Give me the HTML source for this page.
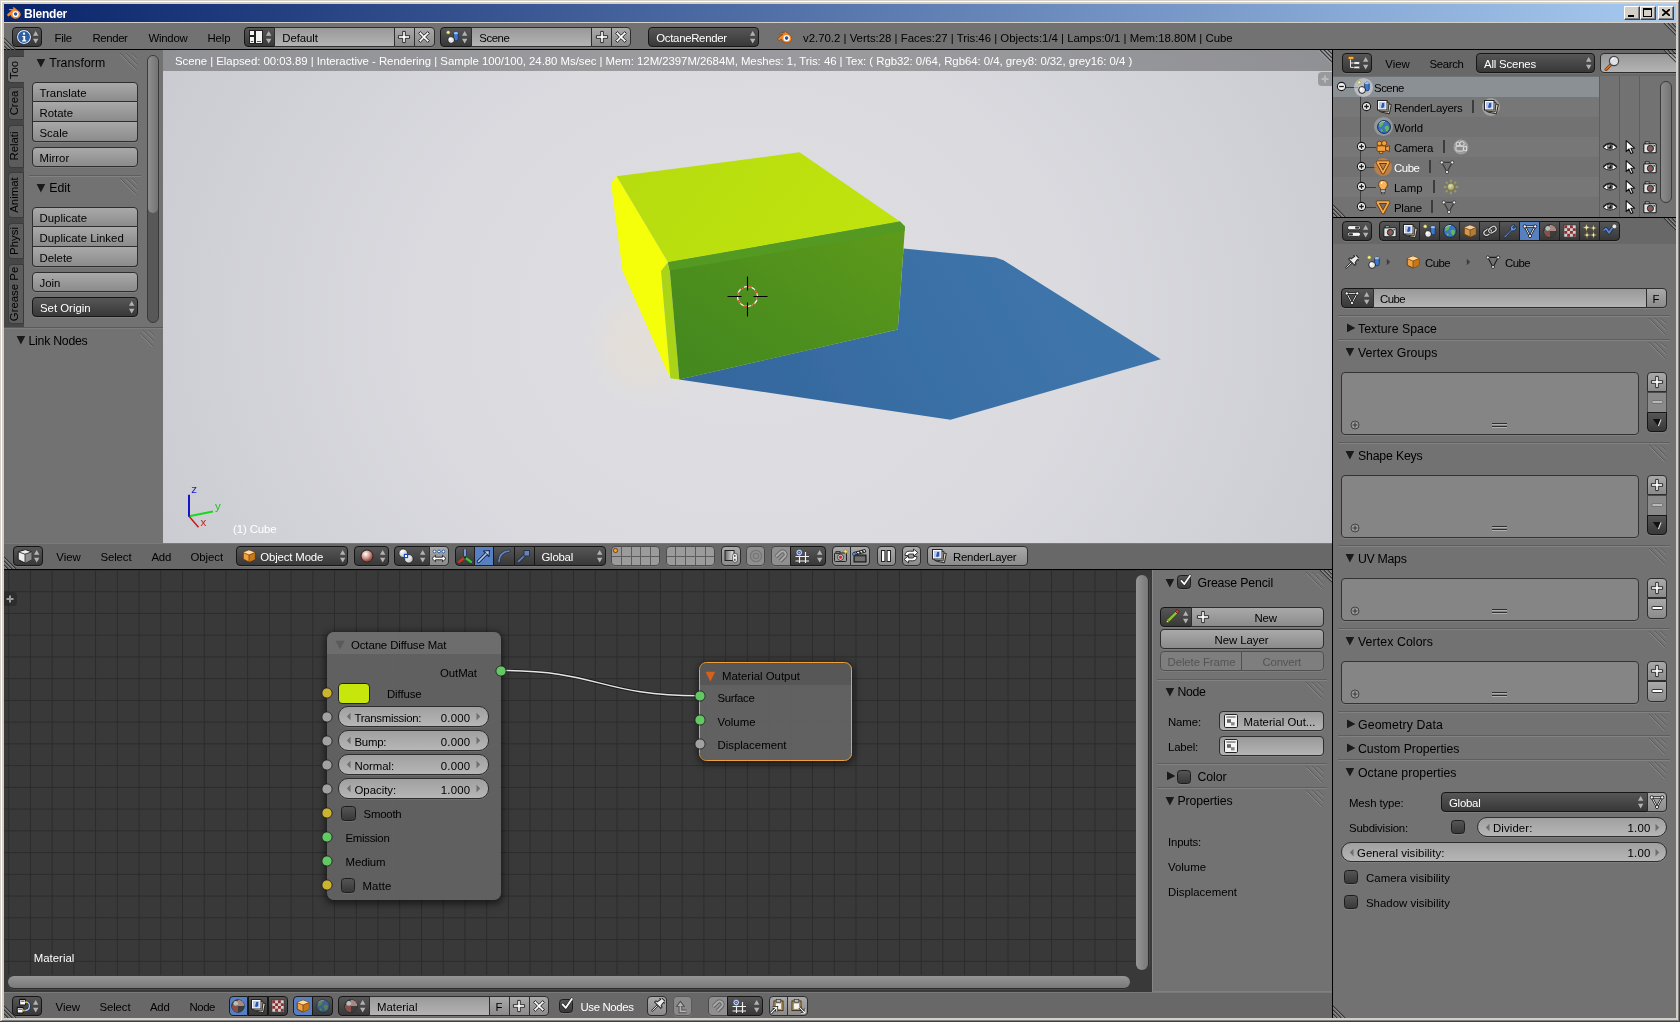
<!DOCTYPE html><html><head><meta charset="utf-8"><title>Blender</title><style>
*{box-sizing:border-box;margin:0;padding:0}
html,body{width:1680px;height:1022px;overflow:hidden}
body{background:#d4d0c8;font-family:"Liberation Sans",sans-serif;font-size:11.4px;position:relative;color:#000}
.a{position:absolute}
#w{position:absolute;left:0;top:0;width:1680px;height:1022px;will-change:transform}
.t{white-space:nowrap;line-height:16px;height:16px}
/* widgets */
.tool{background:linear-gradient(#a9a9a9,#8b8b8b);border:1px solid #2e2e2e;border-radius:4px}
.reg{background:#999;border:1px solid #2e2e2e;border-radius:4px}
.menu{background:linear-gradient(#565656,#383838);border:1px solid #161616;border-radius:4px}
.num{background:linear-gradient(#a0a0a0,#b6b6b6);border:1px solid #2e2e2e;border-radius:10px}
.txt{background:linear-gradient(#999,#b4b4b4);border:1px solid #2e2e2e;border-radius:4px}
.opt{background:linear-gradient(#555,#383838);border:1px solid #1c1c1c;border-radius:3.5px}
.sel{background:#5680c2;border:1px solid #1c1c1c}
.dis{opacity:.5}
.rl{border-top-right-radius:0;border-bottom-right-radius:0}
.rr{border-top-left-radius:0;border-bottom-left-radius:0}
.rt{border-bottom-left-radius:0;border-bottom-right-radius:0}
.rb{border-top-left-radius:0;border-top-right-radius:0}
.r0{border-radius:0}
.nbl{border-left:none}.nbt{border-top:none}
.emb{box-shadow:0 1px 0 rgba(255,255,255,.09)}
.hdr{background:#686868}
.rgn{background:#727272}
.blk{background:#000}
.list{background:#858585;border:1px solid #333;border-radius:4px}
</style></head><body><div id="w"><div class="a " style="left:0px;top:0px;width:1680px;height:1022px;background:#d4d0c8"></div>
<div class="a " style="left:1px;top:1px;width:1678px;height:1020px;border-top:1px solid #fff;border-left:1px solid #fff;border-right:1px solid #808080;border-bottom:1px solid #808080"></div>
<div class="a " style="left:0px;top:1021px;width:1680px;height:1px;background:#404040"></div>
<div class="a " style="left:1679px;top:0px;width:1px;height:1022px;background:#404040"></div>
<div class="a " style="left:4px;top:4px;width:1672px;height:18px;background:linear-gradient(90deg,#0a246a,#a6caf0)"></div>
<div class="a t" style="left:24.0px;top:6.3px;font-size:12px;color:#fff;letter-spacing:-0.240px;font-weight:bold;">Blender</div>
<svg class="a" style="left:6px;top:5px;" width="16" height="16" viewBox="0 0 16 16"><path d="M1.2 9.2 L6 5.2 L3.2 5.2 Q2.4 4.4 3.4 3.9 L7.6 3.9 L6.6 2.8 Q6.9 1.8 8 2.3 L13.4 6.6 Q15.6 9 14 11.6 Q11.6 14.4 8 13.6 Q5 12.8 4.6 9.9 L2.4 11.4 Q1 11 1.2 9.2Z" fill="#f5892a"/><circle cx="9.6" cy="9" r="3.1" fill="#fff"/><circle cx="9.6" cy="9" r="1.7" fill="#27529b"/></svg>
<div class="a " style="left:1624px;top:6px;width:16px;height:14px;background:#d4d0c8;border-top:1px solid #fff;border-left:1px solid #fff;border-right:1px solid #404040;border-bottom:1px solid #404040"></div>
<div class="a " style="left:1625px;top:7px;width:14px;height:12px;border-right:1px solid #808080;border-bottom:1px solid #808080"></div>
<div class="a " style="left:1628px;top:15px;width:6px;height:2px;background:#000"></div>
<div class="a " style="left:1640px;top:6px;width:16px;height:14px;background:#d4d0c8;border-top:1px solid #fff;border-left:1px solid #fff;border-right:1px solid #404040;border-bottom:1px solid #404040"></div>
<div class="a " style="left:1641px;top:7px;width:14px;height:12px;border-right:1px solid #808080;border-bottom:1px solid #808080"></div>
<div class="a " style="left:1643px;top:8px;width:9px;height:9px;border:1px solid #000;border-top:2px solid #000"></div>
<div class="a " style="left:1658px;top:6px;width:16px;height:14px;background:#d4d0c8;border-top:1px solid #fff;border-left:1px solid #fff;border-right:1px solid #404040;border-bottom:1px solid #404040"></div>
<div class="a " style="left:1659px;top:7px;width:14px;height:12px;border-right:1px solid #808080;border-bottom:1px solid #808080"></div>
<svg class="a" style="left:1662px;top:9px;" width="8" height="7" viewBox="0 0 8 7"><path d="M0 0L8 7M8 0L0 7" stroke="#000" stroke-width="1.7"/></svg>
<div class="a " style="left:4px;top:23px;width:1672px;height:995px;background:#000"></div>
<div class="a " style="left:4px;top:23px;width:1672px;height:26px;background:#727272"></div>
<div class="a " style="left:4px;top:50px;width:159px;height:493px;background:#727272"></div>
<div class="a hdr" style="left:4px;top:543px;width:1328px;height:26px;"></div>
<div class="a " style="left:4px;top:543px;width:1328px;height:1px;background:#7a7a7a"></div>
<div class="a " style="left:4px;top:570px;width:1148px;height:422px;background:#393939"></div>
<div class="a " style="left:1152px;top:570px;width:180px;height:422px;background:#727272;border-left:1px solid #868686;border-bottom:1px solid #808080"></div>
<div class="a hdr" style="left:4px;top:992px;width:1328px;height:26px;"></div>
<div class="a " style="left:4px;top:992px;width:1328px;height:1px;background:#7a7a7a"></div>
<div class="a hdr" style="left:1333px;top:50px;width:343px;height:26px;"></div>
<div class="a hdr" style="left:1333px;top:50px;width:343px;height:26px;"></div>
<div class="a " style="left:1333px;top:76px;width:343px;height:141px;background:#727272"></div>
<div class="a hdr" style="left:1333px;top:218px;width:343px;height:26px;"></div>
<div class="a " style="left:1333px;top:244px;width:343px;height:774px;background:#727272"></div>
<svg class="a" style="left:163px;top:50px;" width="1169" height="493" viewBox="0 0 1169 493"><defs><radialGradient id="bg" cx="0.5" cy="0.275" r="0.62" gradientTransform="scale(1 2)"><stop offset="0" stop-color="#dfdfe3"/><stop offset="0.45" stop-color="#dadadf"/><stop offset="0.8" stop-color="#cecfd5"/><stop offset="1" stop-color="#c7c8ce"/></radialGradient><linearGradient id="front" x1="0" y1="1" x2="1" y2="0"><stop offset="0" stop-color="#42871f"/><stop offset="0.5" stop-color="#4f901d"/><stop offset="1" stop-color="#5f9a1a"/></linearGradient><linearGradient id="top" x1="0" y1="0" x2="1" y2="0.3"><stop offset="0" stop-color="#b6dc10"/><stop offset="1" stop-color="#bfe30d"/></linearGradient><linearGradient id="shg2" x1="0" y1="0.5" x2="1" y2="0.3"><stop offset="0" stop-color="#34679d"/><stop offset="0.5" stop-color="#3a70a6"/><stop offset="1" stop-color="#3f77ad"/></linearGradient><filter id="bl" x="-5%" y="-5%" width="110%" height="110%"><feGaussianBlur stdDeviation="0.7"/></filter><filter id="bl2" x="-20%" y="-20%" width="140%" height="140%"><feGaussianBlur stdDeviation="14"/></filter></defs><rect width="1169" height="493" fill="url(#bg)"/><ellipse cx="479" cy="295" rx="42" ry="45" fill="#ece0cc" opacity="0.42" filter="url(#bl2)"/><polygon points="516,329.5 734.8,279.5 740.5,198.6 832.5,207.4 840.5,210.3 997.8,309.2 787.5,369.8" fill="url(#shg2)" filter="url(#bl)"/><polygon points="448,133 453.7,126.3 505,212.3 498,221 507.3,328.3 459.5,221" fill="#f6ff0a"/><polygon points="453.7,126.3 636.5,102.3 737,171.6 505,212.3" fill="url(#top)"/><polygon points="498,221 505,212.3 506.8,220.5 516.3,329.6 507.3,328.3" fill="#a9d418"/><polygon points="505,212.3 737,171.6 742,176.5 734.8,279.5 516.3,329.6 506.8,220.5" fill="url(#front)"/><polygon points="505,212.3 737,171.6 742,176.5 741.6,181 506.8,220.5" fill="#549a22"/><circle cx="584.5" cy="246.5" r="10" fill="none" stroke="#fff" stroke-width="1.2"/><circle cx="584.5" cy="246.5" r="10" fill="none" stroke="#e03010" stroke-width="1.2" stroke-dasharray="3.9 3.95"/><path d="M564.5 246.5h14M590.5 246.5h14M584.5 226.5v14M584.5 252.5v14" stroke="#000" stroke-width="1.1"/><path d="M26 466.3L35.5 477.3" stroke="#c81818" stroke-width="1.5"/><path d="M26 466.3L50 461.6" stroke="#1ad81a" stroke-width="2"/><path d="M26 466.8L26 444.8" stroke="#1515c8" stroke-width="2"/></svg>
<div class="a t" style="left:200.5px;top:514.3px;font-size:11.5px;color:#cc2020;">x</div>
<div class="a t" style="left:215.0px;top:498.3px;font-size:11.5px;color:#22c022;">y</div>
<div class="a t" style="left:191.3px;top:481.3px;font-size:11.5px;color:#1c1ccc;">z</div>
<div class="a " style="left:163px;top:50px;width:1169px;height:21px;background:rgba(0,0,0,0.29)"></div>
<div class="a t" style="left:175.0px;top:53.1px;font-size:11.4px;color:#fff;letter-spacing:-0.035px;">Scene | Elapsed: 00:03.89 | Interactive - Rendering | Sample 100/100, 24.80 Ms/sec | Mem: 12M/2397M/2684M, Meshes: 1, Tris: 46 | Tex: ( Rgb32: 0/64, Rgb64: 0/4, grey8: 0/32, grey16: 0/4 )</div>
<div class="a t" style="left:233.0px;top:521.3px;font-size:11.4px;color:#fff;letter-spacing:-0.107px;">(1) Cube</div>
<div class="a " style="left:1318px;top:72px;width:14px;height:14px;background:rgba(60,60,60,.35);border-radius:4px 0 0 4px"></div>
<svg class="a" style="left:1321px;top:75px;" width="8" height="8" viewBox="0 0 8 8"><path d="M4 0.5v7M0.5 4h7" stroke="#c8c8c8" stroke-width="2" opacity=".7"/></svg>
<svg class="a" style="left:1319px;top:50px;" width="13" height="13" viewBox="0 0 13 13"><path d="M1 0L13 12M5 0L13 8M9 0L13 4" stroke="#222" stroke-width="1.2" opacity=".8"/><path d="M0 0.6L12.4 13M4 0.6L12.4 9M8 .6L12.4 5" stroke="#ddd" stroke-width=".8" opacity=".5"/></svg>
<svg class="a" style="left:4px;top:36px;" width="14" height="14" viewBox="0 0 14 14"><path d="M0 2L12 14M0 6L8 14M0 10L4 14" stroke="#222" stroke-width="1.1" opacity=".75"/><path d="M0 3.2L10.8 14M0 7.2L6.8 14M0 11.2L2.8 14" stroke="#c8c8c8" stroke-width=".9" opacity=".55"/></svg>
<div class="a menu emb" style="left:12.3px;top:27px;width:30px;height:20px;"></div>
<svg class="a" style="left:16.3px;top:29px;" width="16" height="16" viewBox="0 0 16 16"><circle cx="8" cy="8" r="6.6" fill="#2e5fa3" stroke="#e8eef8" stroke-width="1.2"/><circle cx="8" cy="8" r="7.4" fill="none" stroke="#1c2c48" stroke-width=".7"/><path d="M6.3 6.9h2.9v4.3h1.1v1.2H6.1v-1.2h1.2V8.1H6.3z" fill="#fff"/><circle cx="8" cy="4.7" r="1.15" fill="#fff"/></svg>
<svg class="a" style="left:32.1px;top:29.7px;" width="7.4" height="14.6" viewBox="0 0 7.4 14.6"><path d="M1 5.8L3.7 1L6.4 5.8Z M1 8.8L3.7 13.6L6.4 8.8Z" fill="#b2b2b2"/></svg>
<div class="a t" style="left:54.5px;top:29.7px;font-size:11.4px;color:#000;letter-spacing:-0.217px;">File</div>
<div class="a t" style="left:92.5px;top:29.7px;font-size:11.4px;color:#000;letter-spacing:-0.398px;">Render</div>
<div class="a t" style="left:148.5px;top:29.7px;font-size:11.4px;color:#000;letter-spacing:-0.258px;">Window</div>
<div class="a t" style="left:207.5px;top:29.7px;font-size:11.4px;color:#000;letter-spacing:-0.111px;">Help</div>
<div class="a menu rl emb" style="left:243.8px;top:27px;width:31px;height:20px;"></div>
<svg class="a" style="left:248.3px;top:29px;" width="16" height="16" viewBox="0 0 16 16"><rect x="1.5" y="1.5" width="5" height="5" fill="#f4f4f4" stroke="#222" stroke-width="1"/><rect x="1.5" y="7.5" width="5" height="7" fill="#f4f4f4" stroke="#222"/><rect x="7.5" y="1.5" width="7" height="13" fill="#f4f4f4" stroke="#222"/><path d="M2.8 12.5h2.4M9 12.5h4" stroke="#555" stroke-width="1"/></svg>
<svg class="a" style="left:265.1px;top:29.7px;" width="7.4" height="14.6" viewBox="0 0 7.4 14.6"><path d="M1 5.8L3.7 1L6.4 5.8Z M1 8.8L3.7 13.6L6.4 8.8Z" fill="#b2b2b2"/></svg>
<div class="a txt r0 emb" style="left:273.8px;top:27px;width:121.1px;height:20px;"></div>
<div class="a t" style="left:282.3px;top:29.7px;font-size:11.4px;color:#000;letter-spacing:-0.089px;">Default</div>
<div class="a tool r0 emb" style="left:393.9px;top:27px;width:21px;height:20px;"></div>
<svg class="a" style="left:396.4px;top:29px;" width="16" height="16" viewBox="0 0 16 16"><path d="M6.7 2.4h2.6v4.3h4.3v2.6h-4.3v4.3h-2.6v-4.3h-4.3v-2.6h4.3z" fill="#fff" stroke="#1c1c1c" stroke-width=".9" stroke-linejoin="round"/></svg>
<div class="a tool rr emb" style="left:413.9px;top:27px;width:20.7px;height:20px;"></div>
<svg class="a" style="left:415.9px;top:29px;" width="16" height="16" viewBox="0 0 16 16"><path transform="rotate(45 8 8)" d="M6.8 1.6h2.4v5.2h5.2v2.4h-5.2v5.2h-2.4v-5.2h-5.2v-2.4h5.2z" fill="#fff" stroke="#1c1c1c" stroke-width=".9" stroke-linejoin="round"/></svg>
<div class="a menu rl emb" style="left:440px;top:27px;width:31.8px;height:20px;"></div>
<svg class="a" style="left:444.5px;top:29px;" width="16" height="16" viewBox="0 0 16 16"><rect x="8.6" y="3.2" width="4.6" height="8.6" rx="2" fill="#3f78c8" stroke="#16305e" stroke-width=".8"/><ellipse cx="10.9" cy="4.2" rx="2.2" ry="1.1" fill="#9cc0f0"/><circle cx="6.1" cy="11" r="3.4" fill="#e8e8e8" stroke="#1a1a1a" stroke-width="1"/><circle cx="5" cy="9.9" r="1.3" fill="#fff"/><circle cx="3.2" cy="3.4" r="1.7" fill="#f4f08a" stroke="#8a8a30" stroke-width=".5"/></svg>
<svg class="a" style="left:461.3px;top:29.7px;" width="7.4" height="14.6" viewBox="0 0 7.4 14.6"><path d="M1 5.8L3.7 1L6.4 5.8Z M1 8.8L3.7 13.6L6.4 8.8Z" fill="#b2b2b2"/></svg>
<div class="a txt r0 emb" style="left:470.8px;top:27px;width:121.5px;height:20px;"></div>
<div class="a t" style="left:479.3px;top:29.7px;font-size:11.4px;color:#000;letter-spacing:-0.465px;">Scene</div>
<div class="a tool r0 emb" style="left:591.3px;top:27px;width:20.5px;height:20px;"></div>
<svg class="a" style="left:593.8px;top:29px;" width="16" height="16" viewBox="0 0 16 16"><path d="M6.7 2.4h2.6v4.3h4.3v2.6h-4.3v4.3h-2.6v-4.3h-4.3v-2.6h4.3z" fill="#fff" stroke="#1c1c1c" stroke-width=".9" stroke-linejoin="round"/></svg>
<div class="a tool rr emb" style="left:610.8px;top:27px;width:20.5px;height:20px;"></div>
<svg class="a" style="left:612.8px;top:29px;" width="16" height="16" viewBox="0 0 16 16"><path transform="rotate(45 8 8)" d="M6.8 1.6h2.4v5.2h5.2v2.4h-5.2v5.2h-2.4v-5.2h-5.2v-2.4h5.2z" fill="#fff" stroke="#1c1c1c" stroke-width=".9" stroke-linejoin="round"/></svg>
<div class="a menu emb" style="left:648px;top:27px;width:111px;height:20px;"></div>
<div class="a t" style="left:656.3px;top:29.7px;font-size:11.4px;color:#fff;letter-spacing:-0.304px;">OctaneRender</div>
<svg class="a" style="left:748.8px;top:29.7px;" width="7.4" height="14.6" viewBox="0 0 7.4 14.6"><path d="M1 5.8L3.7 1L6.4 5.8Z M1 8.8L3.7 13.6L6.4 8.8Z" fill="#b2b2b2"/></svg>
<svg class="a" style="left:777px;top:29px;" width="16" height="16" viewBox="0 0 16 16"><path d="M0.8 9.4L6 5.3H3.2Q2.2 4.5 3.3 3.9H7.7L6.6 2.9Q6.8 1.7 8 2.2L13.6 6.6Q15.8 9 14.2 11.8Q11.8 14.6 8 13.8Q5 13 4.5 10L2.3 11.6Q0.8 11.2.8 9.4Z" fill="#f5892a" stroke="#7a3c06" stroke-width=".6"/><circle cx="9.6" cy="9.1" r="3.2" fill="#fff"/><circle cx="9.6" cy="9.1" r="1.8" fill="#27529b"/></svg>
<div class="a t" style="left:803.0px;top:29.7px;font-size:11.4px;color:#000;letter-spacing:-0.001px;">v2.70.2 | Verts:28 | Faces:27 | Tris:46 | Objects:1/4 | Lamps:0/1 | Mem:18.80M | Cube</div>
<svg class="a" style="left:1662px;top:23px;" width="14" height="14" viewBox="0 0 14 14"><path d="M2 0L14 12M6 0L14 8M10 0L14 4" stroke="#222" stroke-width="1.1" opacity=".75"/><path d="M3.2 0L14 10.8M7.2 0L14 6.8M11.2 0L14 2.8" stroke="#c8c8c8" stroke-width=".9" opacity=".55"/></svg>
<svg class="a" style="left:4px;top:555px;" width="14" height="14" viewBox="0 0 14 14"><path d="M0 2L12 14M0 6L8 14M0 10L4 14" stroke="#222" stroke-width="1.1" opacity=".75"/><path d="M0 3.2L10.8 14M0 7.2L6.8 14M0 11.2L2.8 14" stroke="#c8c8c8" stroke-width=".9" opacity=".55"/></svg>
<div class="a menu emb" style="left:13px;top:546px;width:30px;height:20px;"></div>
<svg class="a" style="left:17px;top:548px;" width="16" height="16" viewBox="0 0 16 16"><path d="M1.2 3.8L8.4 1.6L14.6 3.8V11.6L8 15L1.2 11.6Z" fill="#ececec" stroke="#1e1e1e" stroke-width="1" stroke-linejoin="round"/><path d="M8 6.2V15L14.6 11.6V3.8Z" fill="#8a8a8a"/><path d="M1.2 3.8L8 6.2L14.6 3.8" fill="none" stroke="#1e1e1e" stroke-width=".8"/><path d="M8 6.2V15" stroke="#1e1e1e" stroke-width=".8"/></svg>
<svg class="a" style="left:32.8px;top:548.7px;" width="7.4" height="14.6" viewBox="0 0 7.4 14.6"><path d="M1 5.8L3.7 1L6.4 5.8Z M1 8.8L3.7 13.6L6.4 8.8Z" fill="#b2b2b2"/></svg>
<div class="a t" style="left:56.3px;top:548.7px;font-size:11.4px;color:#000;letter-spacing:-0.001px;">View</div>
<div class="a t" style="left:100.5px;top:548.7px;font-size:11.4px;color:#000;letter-spacing:-0.114px;">Select</div>
<div class="a t" style="left:151.5px;top:548.7px;font-size:11.4px;color:#000;letter-spacing:-0.261px;">Add</div>
<div class="a t" style="left:190.5px;top:548.7px;font-size:11.4px;color:#000;letter-spacing:-0.075px;">Object</div>
<div class="a menu emb" style="left:236.3px;top:546px;width:112px;height:20px;"></div>
<svg class="a" style="left:241px;top:548px;" width="16" height="16" viewBox="0 0 16 16"><path d="M2.2 4.6L8 2.2L13.8 4.6V11.2L8 14L2.2 11.2Z" fill="#f0a040" stroke="#6a3a08" stroke-width="1" stroke-linejoin="round"/><path d="M2.2 4.6L8 7L13.8 4.6L8 2.2Z" fill="#ffd9a0"/><path d="M8 7V14L13.8 11.2V4.6Z" fill="#c87818"/><path d="M2.2 4.6L8 7L13.8 4.6M8 7V14" fill="none" stroke="#6a3a08" stroke-width=".7"/></svg>
<div class="a t" style="left:260.3px;top:548.7px;font-size:11.4px;color:#fff;letter-spacing:-0.148px;">Object Mode</div>
<svg class="a" style="left:338.8px;top:548.7px;" width="7.4" height="14.6" viewBox="0 0 7.4 14.6"><path d="M1 5.8L3.7 1L6.4 5.8Z M1 8.8L3.7 13.6L6.4 8.8Z" fill="#b2b2b2"/></svg>
<div class="a menu emb" style="left:354px;top:546px;width:34.5px;height:20px;"></div>
<svg class="a" style="left:358.5px;top:548px;" width="16" height="16" viewBox="0 0 16 16"><circle cx="8" cy="8" r="6" fill="#b8574a" stroke="#222" stroke-width="1"/><circle cx="8" cy="8" r="5.4" fill="url(#shg)"/><defs><radialGradient id="shg" cx=".38" cy=".32" r=".75"><stop offset="0" stop-color="#fff"/><stop offset=".45" stop-color="#d8a8a0"/><stop offset="1" stop-color="#8a3020"/></radialGradient></defs></svg>
<svg class="a" style="left:378.8px;top:548.7px;" width="7.4" height="14.6" viewBox="0 0 7.4 14.6"><path d="M1 5.8L3.7 1L6.4 5.8Z M1 8.8L3.7 13.6L6.4 8.8Z" fill="#b2b2b2"/></svg>
<div class="a menu rl emb" style="left:394px;top:546px;width:35.5px;height:20px;"></div>
<svg class="a" style="left:398px;top:548px;" width="16" height="16" viewBox="0 0 16 16"><circle cx="5.2" cy="5.2" r="4.3" fill="url(#pvg)" stroke="#222" stroke-width=".8"/><circle cx="10.8" cy="10.8" r="4.3" fill="url(#pvg)" stroke="#222" stroke-width=".8"/><defs><radialGradient id="pvg" cx=".35" cy=".3" r=".8"><stop offset="0" stop-color="#fff"/><stop offset="1" stop-color="#b8b8b8"/></radialGradient></defs><rect x="6.4" y="6.4" width="3.2" height="3.2" fill="#fff" stroke="#1050c0" stroke-width="1.2"/></svg>
<svg class="a" style="left:418.8px;top:548.7px;" width="7.4" height="14.6" viewBox="0 0 7.4 14.6"><path d="M1 5.8L3.7 1L6.4 5.8Z M1 8.8L3.7 13.6L6.4 8.8Z" fill="#b2b2b2"/></svg>
<div class="a tool rr emb" style="left:428.5px;top:546px;width:20px;height:20px;"></div>
<svg class="a" style="left:430.5px;top:548px;" width="16" height="16" viewBox="0 0 16 16"><circle cx="3.5" cy="3.5" r="1.4" fill="#fff" stroke="#1c4fa0" stroke-width=".9"/><circle cx="8" cy="3.5" r="1.4" fill="#fff" stroke="#1c4fa0" stroke-width=".9"/><circle cx="12.5" cy="3.5" r="1.4" fill="#fff" stroke="#1c4fa0" stroke-width=".9"/><path d="M1 10.5L4.5 7.2V9.2H11.5V7.2L15 10.5L11.5 13.8V11.8H4.5V13.8Z" fill="#fff" stroke="#222" stroke-width=".9" stroke-linejoin="round"/></svg>
<div class="a menu rl emb" style="left:455px;top:546px;width:19.5px;height:20px;"></div>
<svg class="a" style="left:456.5px;top:548px;" width="16" height="16" viewBox="0 0 16 16"><path d="M8 9.5V1.2" stroke="#1a2a60" stroke-width="3"/><path d="M8 9.5V1.2" stroke="#9ab8f8" stroke-width="1.5"/><path d="M8 9.5L2 13.8" stroke="#e0301a" stroke-width="2.2" stroke-linecap="round"/><path d="M8 9.5L14 13.8" stroke="#38c838" stroke-width="2.2" stroke-linecap="round"/><circle cx="8" cy="9.5" r="1.2" fill="#222"/></svg>
<div class="a sel r0 emb" style="left:473.5px;top:546px;width:20.5px;height:20px;"></div>
<svg class="a" style="left:475.5px;top:548px;" width="16" height="16" viewBox="0 0 16 16"><path d="M2.5 13.5L10 6" stroke="#1a2c50" stroke-width="3.4" stroke-linecap="round"/><path d="M7.5 3L13.5 2.5L13 8.5Z" fill="#b4ccf0" stroke="#1a2c50" stroke-width="1.1" stroke-linejoin="round"/><path d="M2.5 13.5L10 6" stroke="#b4ccf0" stroke-width="1.6" stroke-linecap="round"/></svg>
<div class="a menu r0 emb" style="left:493px;top:546px;width:21.5px;height:20px;"></div>
<svg class="a" style="left:495.5px;top:548px;" width="16" height="16" viewBox="0 0 16 16"><path d="M3 13.5Q3.5 4 13 3" fill="none" stroke="#26344e" stroke-width="3.2" stroke-linecap="round"/><path d="M3 13.5Q3.5 4 13 3" fill="none" stroke="#6784b6" stroke-width="1.7" stroke-linecap="round"/></svg>
<div class="a menu r0 emb" style="left:513.5px;top:546px;width:21px;height:20px;"></div>
<svg class="a" style="left:516px;top:548px;" width="16" height="16" viewBox="0 0 16 16"><path d="M2.5 13.5L9 7" stroke="#26344e" stroke-width="3.2" stroke-linecap="round"/><path d="M2.5 13.5L9 7" stroke="#6784b6" stroke-width="1.7" stroke-linecap="round"/><rect x="8" y="2.5" width="5.5" height="5.5" fill="#6784b6" stroke="#26344e" stroke-width="1"/></svg>
<div class="a menu rr emb" style="left:533.5px;top:546px;width:72px;height:20px;"></div>
<div class="a t" style="left:541.5px;top:548.7px;font-size:11.4px;color:#fff;letter-spacing:-0.242px;">Global</div>
<svg class="a" style="left:595.8px;top:548.7px;" width="7.4" height="14.6" viewBox="0 0 7.4 14.6"><path d="M1 5.8L3.7 1L6.4 5.8Z M1 8.8L3.7 13.6L6.4 8.8Z" fill="#b2b2b2"/></svg>
<div class="a reg emb" style="left:611px;top:546px;width:49px;height:20px;background:#9b9b9b;border-color:#4c4c4c"></div>
<div class="a " style="left:620.75px;top:547px;width:1px;height:18px;background:#5c5c5c"></div>
<div class="a " style="left:630.5px;top:547px;width:1px;height:18px;background:#5c5c5c"></div>
<div class="a " style="left:640.25px;top:547px;width:1px;height:18px;background:#5c5c5c"></div>
<div class="a " style="left:650px;top:547px;width:1px;height:18px;background:#5c5c5c"></div>
<div class="a " style="left:612px;top:555.5px;width:47px;height:1px;background:#5c5c5c"></div>
<div class="a reg emb" style="left:665.6px;top:546px;width:49px;height:20px;background:#9b9b9b;border-color:#4c4c4c"></div>
<div class="a " style="left:675.35px;top:547px;width:1px;height:18px;background:#5c5c5c"></div>
<div class="a " style="left:685.1px;top:547px;width:1px;height:18px;background:#5c5c5c"></div>
<div class="a " style="left:694.85px;top:547px;width:1px;height:18px;background:#5c5c5c"></div>
<div class="a " style="left:704.6px;top:547px;width:1px;height:18px;background:#5c5c5c"></div>
<div class="a " style="left:666.6px;top:555.5px;width:47px;height:1px;background:#5c5c5c"></div>
<svg class="a" style="left:612px;top:547px;" width="7" height="7" viewBox="0 0 7 7"><circle cx="3.5" cy="3.5" r="2.1" fill="#f7a030" stroke="#5a3008" stroke-width=".8"/></svg>
<div class="a tool emb" style="left:721.3px;top:546px;width:19.5px;height:20px;"></div>
<svg class="a" style="left:723px;top:548px;" width="16" height="16" viewBox="0 0 16 16"><rect x="2" y="2.5" width="9" height="10" fill="url(#llg)" stroke="#222" stroke-width="1"/><defs><linearGradient id="llg" x1="0" x2="1"><stop offset="0" stop-color="#666"/><stop offset="1" stop-color="#eee"/></linearGradient></defs><rect x="10.3" y="6" width="3.4" height="4" rx="1.6" fill="none" stroke="#f4f4f4" stroke-width="1.3"/><rect x="10.3" y="9.3" width="3.4" height="4.4" rx="1.6" fill="none" stroke="#f4f4f4" stroke-width="1.3"/><rect x="9.6" y="5.3" width="4.8" height="9" rx="2.3" fill="none" stroke="#222" stroke-width=".6"/></svg>
<div class="a tool emb" style="left:746.3px;top:546px;width:19px;height:20px;border-color:#484848;background:#8f8f8f"></div>
<svg class="a" style="left:747.8px;top:548px;" width="16" height="16" viewBox="0 0 16 16"><circle cx="8" cy="8" r="5.6" fill="none" stroke="#777" stroke-width="1.4"/><circle cx="8" cy="8" r="2.6" fill="none" stroke="#777" stroke-width="1.4"/></svg>
<div class="a tool rl emb" style="left:771.3px;top:546px;width:20px;height:20px;border-color:#484848;background:#8f8f8f"></div>
<svg class="a" style="left:773px;top:548px;" width="16" height="16" viewBox="0 0 16 16"><g transform="translate(9.6 6.4) rotate(45)"><path d="M-3.1 6.4V0A3.1 3.1 0 0 1 3.1 0V6.4" fill="none" stroke="#5a5a5a" stroke-width="3.7"/><path d="M-3.1 6.2V0A3.1 3.1 0 0 1 3.1 0V6.2" fill="none" stroke="#a9a9a9" stroke-width="2.1"/></g></svg>
<div class="a menu rr emb" style="left:790.3px;top:546px;width:35.5px;height:20px;"></div>
<svg class="a" style="left:794px;top:548px;" width="16" height="16" viewBox="0 0 16 16"><path d="M5.5 4V15M11.5 4V15M1.5 8.5H15M1.5 13H15" stroke="#f0f0f0" stroke-width="1.15"/><circle cx="5.2" cy="4.6" r="3" fill="#e8f0ff" stroke="#2a2a2a" stroke-width=".5"/><circle cx="5.2" cy="4.6" r="1.8" fill="#2a60e0"/><circle cx="5.2" cy="4.6" r=".7" fill="#cfe0ff"/></svg>
<svg class="a" style="left:815.8px;top:548.7px;" width="7.4" height="14.6" viewBox="0 0 7.4 14.6"><path d="M1 5.8L3.7 1L6.4 5.8Z M1 8.8L3.7 13.6L6.4 8.8Z" fill="#b2b2b2"/></svg>
<div class="a tool rl emb" style="left:831.8px;top:546px;width:19px;height:20px;"></div>
<svg class="a" style="left:833.3px;top:548px;" width="16" height="16" viewBox="0 0 16 16"><rect x="1.5" y="5" width="12" height="8.5" rx="1" fill="#9a9a9a" stroke="#222" stroke-width="1"/><rect x="3" y="3.5" width="4" height="2" fill="#777" stroke="#222" stroke-width=".7"/><circle cx="7.5" cy="9.3" r="3" fill="#ddd" stroke="#222" stroke-width=".8"/><circle cx="7.5" cy="9.3" r="1.7" fill="#c83030"/><path d="M12.5 .5L13.3 2.7L15.5 3.5L13.3 4.3L12.5 6.5L11.7 4.3L9.5 3.5L11.7 2.7Z" fill="#ffe060" stroke="#a07800" stroke-width=".4"/></svg>
<div class="a tool rr emb" style="left:849.8px;top:546px;width:20.2px;height:20px;"></div>
<svg class="a" style="left:852px;top:548px;" width="16" height="16" viewBox="0 0 16 16"><rect x="2" y="7" width="12" height="7" fill="#555" stroke="#111" stroke-width="1"/><path d="M1.5 4.5L13 1.5L13.8 4L2.3 7Z" fill="#eee" stroke="#111" stroke-width=".9"/><path d="M4 4L5.6 6M7 3.2L8.6 5.2M10 2.4L11.6 4.4" stroke="#111" stroke-width="1.2"/><path d="M3 10h10M3 12h10" stroke="#999" stroke-width=".8"/><circle cx="2" cy="6" r="1.6" fill="#4a90e0" stroke="#124" stroke-width=".5"/></svg>
<div class="a tool emb" style="left:876.8px;top:546px;width:19px;height:20px;"></div>
<svg class="a" style="left:878.3px;top:548px;" width="16" height="16" viewBox="0 0 16 16"><rect x="3.5" y="2.5" width="3.4" height="11" fill="#fff" stroke="#222" stroke-width="1"/><rect x="9.1" y="2.5" width="3.4" height="11" fill="#fff" stroke="#222" stroke-width="1"/></svg>
<div class="a tool emb" style="left:901.8px;top:546px;width:19px;height:20px;"></div>
<svg class="a" style="left:903.3px;top:548px;" width="16" height="16" viewBox="0 0 16 16"><path d="M2 7.5Q2 3.2 6.5 3.2H10.5V1L14.8 4.6L10.5 8.2V6H6.5Q5 6 5 7.5Z" fill="#fff" stroke="#222" stroke-width=".9" stroke-linejoin="round"/><path d="M14 8.5Q14 12.8 9.5 12.8H5.5V15L1.2 11.4L5.5 7.8V10H9.5Q11 10 11 8.5Z" fill="#fff" stroke="#222" stroke-width=".9" stroke-linejoin="round"/></svg>
<div class="a tool emb" style="left:926.8px;top:546px;width:101px;height:20px;"></div>
<svg class="a" style="left:930.5px;top:548px;" width="16" height="16" viewBox="0 0 16 16"><rect x="5.5" y="4.5" width="9" height="9.5" fill="#d8d0b8" stroke="#222" stroke-width=".9" transform="rotate(12 10 9)"/><rect x="3.5" y="3" width="9" height="9.5" fill="#e8e4d8" stroke="#222" stroke-width=".9" transform="rotate(5 8 8)"/><rect x="1.5" y="1.5" width="9.5" height="9.5" fill="#fafafa" stroke="#222" stroke-width="1"/><rect x="3" y="3" width="6.5" height="6.5" fill="#b8c8e8"/><path d="M5 8.5L6.2 4H8.2V7.6Q7.4 9.6 5 8.5Z" fill="#2a56b8"/></svg>
<div class="a t" style="left:953.0px;top:548.7px;font-size:11.4px;color:#000;letter-spacing:-0.219px;">RenderLayer</div>
<svg class="a" style="left:4px;top:1004px;" width="14" height="14" viewBox="0 0 14 14"><path d="M0 2L12 14M0 6L8 14M0 10L4 14" stroke="#222" stroke-width="1.1" opacity=".75"/><path d="M0 3.2L10.8 14M0 7.2L6.8 14M0 11.2L2.8 14" stroke="#c8c8c8" stroke-width=".9" opacity=".55"/></svg>
<div class="a menu emb" style="left:12px;top:996px;width:30px;height:20px;"></div>
<svg class="a" style="left:16px;top:998px;" width="16" height="16" viewBox="0 0 16 16"><path d="M9.6 4.2Q13.6 4 13.4 8.4Q13.2 12.6 8.6 12.6" fill="none" stroke="#25324a" stroke-width="2.6"/><path d="M9.6 4.2Q13.6 4 13.4 8.4Q13.2 12.6 8.6 12.6" fill="none" stroke="#a9c4f2" stroke-width="1.3"/><rect x="3.6" y="1.4" width="6" height="5.6" rx=".8" fill="#f6f6f6" stroke="#111" stroke-width="1.1"/><rect x="1.2" y="9.4" width="6" height="5.6" rx=".8" fill="#f6f6f6" stroke="#111" stroke-width="1.1"/><path d="M4.8 3.2h3.6M2.4 11.2h3.6" stroke="#444" stroke-width="1"/><circle cx="10" cy="4.3" r="1" fill="#f0b020"/><circle cx="7.6" cy="12.5" r="1" fill="#f0b020"/></svg>
<svg class="a" style="left:31.8px;top:998.7px;" width="7.4" height="14.6" viewBox="0 0 7.4 14.6"><path d="M1 5.8L3.7 1L6.4 5.8Z M1 8.8L3.7 13.6L6.4 8.8Z" fill="#b2b2b2"/></svg>
<div class="a t" style="left:55.5px;top:998.7px;font-size:11.4px;color:#000;letter-spacing:-0.001px;">View</div>
<div class="a t" style="left:99.5px;top:998.7px;font-size:11.4px;color:#000;letter-spacing:-0.114px;">Select</div>
<div class="a t" style="left:150.0px;top:998.7px;font-size:11.4px;color:#000;letter-spacing:-0.261px;">Add</div>
<div class="a t" style="left:189.5px;top:998.7px;font-size:11.4px;color:#000;letter-spacing:-0.438px;">Node</div>
<div class="a sel rl emb" style="left:228.8px;top:996px;width:19.5px;height:20px;border-radius:4px 0 0 4px"></div>
<svg class="a" style="left:230.3px;top:998px;" width="16" height="16" viewBox="0 0 16 16"><circle cx="8" cy="8" r="6.2" fill="#6a6a6a" stroke="#222" stroke-width="1"/><path d="M8 8L8 1.8A6.2 6.2 0 0 1 14.2 8Z" fill="#a88880"/><path d="M8 8L1.8 8A6.2 6.2 0 0 0 8 14.2Z" fill="#8a5048"/><path d="M8 8L8 14.2A6.2 6.2 0 0 0 14.2 8Z" fill="#3c3c3c"/><circle cx="5.8" cy="5.4" r="2.4" fill="#fff" opacity=".55"/></svg>
<div class="a menu r0 emb" style="left:247.5px;top:996px;width:20.7px;height:20px;"></div>
<svg class="a" style="left:249.8px;top:998px;" width="16" height="16" viewBox="0 0 16 16"><rect x="5.5" y="4.5" width="9" height="9.5" fill="#d8d0b8" stroke="#222" stroke-width=".9" transform="rotate(12 10 9)"/><rect x="3.5" y="3" width="9" height="9.5" fill="#e8e4d8" stroke="#222" stroke-width=".9" transform="rotate(5 8 8)"/><rect x="1.5" y="1.5" width="9.5" height="9.5" fill="#fafafa" stroke="#222" stroke-width="1"/><rect x="3" y="3" width="6.5" height="6.5" fill="#b8c8e8"/><path d="M5 8.5L6.2 4H8.2V7.6Q7.4 9.6 5 8.5Z" fill="#2a56b8"/></svg>
<div class="a menu rr emb" style="left:267.5px;top:996px;width:20.3px;height:20px;"></div>
<svg class="a" style="left:269.8px;top:998px;" width="16" height="16" viewBox="0 0 16 16"><rect x="1.8" y="1.8" width="12.4" height="12.4" fill="#cfcfcf" stroke="#333" stroke-width=".9"/><path d="M2.3 2.3h2.85v2.85h-2.85zM8 2.3h2.85v2.85h-2.85zM5.15 5.15h2.85v2.85h-2.85zM10.85 5.15h2.85v2.85h-2.85zM2.3 8h2.85v2.85h-2.85zM8 8h2.85v2.85h-2.85zM5.15 10.85h2.85v2.85h-2.85zM10.85 10.85h2.85v2.85h-2.85z" fill="#8e3030"/></svg>
<div class="a sel rl emb" style="left:293px;top:996px;width:20px;height:20px;border-radius:4px 0 0 4px"></div>
<svg class="a" style="left:295px;top:998px;" width="16" height="16" viewBox="0 0 16 16"><path d="M2.2 4.6L8 2.2L13.8 4.6V11.2L8 14L2.2 11.2Z" fill="#f0a040" stroke="#6a3a08" stroke-width="1" stroke-linejoin="round"/><path d="M2.2 4.6L8 7L13.8 4.6L8 2.2Z" fill="#ffd9a0"/><path d="M8 7V14L13.8 11.2V4.6Z" fill="#c87818"/><path d="M2.2 4.6L8 7L13.8 4.6M8 7V14" fill="none" stroke="#6a3a08" stroke-width=".7"/></svg>
<div class="a menu rr emb" style="left:312.3px;top:996px;width:20.5px;height:20px;"></div>
<svg class="a" style="left:314.5px;top:998px;opacity:.55" width="16" height="16" viewBox="0 0 16 16"><circle cx="8" cy="8" r="6.4" fill="#3f74c0" stroke="#1a2a48" stroke-width="1"/><path d="M3.5 5Q5 2.6 7.6 2.6Q8.6 4 7 5Q7.4 6.6 5.6 7Q4.4 8.6 3 7.4Z" fill="#5fb85a"/><path d="M8.8 7.4Q11 6 12.8 7.6Q13.6 10 11.4 12.6Q9.6 12.6 9.6 10.6Q8 9.2 8.8 7.4Z" fill="#5fb85a"/><path d="M4.6 10.4Q6.4 10 6.8 11.8Q6.4 13.4 5 12.6Z" fill="#5fb85a"/><path d="M3.2 4.6Q5.6 2 9 2.4" fill="none" stroke="#cfe0f8" stroke-width="1" opacity=".7"/></svg>
<div class="a menu rl emb" style="left:338px;top:996px;width:31.5px;height:20px;"></div>
<svg class="a" style="left:342.5px;top:998px;" width="16" height="16" viewBox="0 0 16 16"><circle cx="8" cy="8" r="6.2" fill="#6a6a6a" stroke="#222" stroke-width="1"/><path d="M8 8L8 1.8A6.2 6.2 0 0 1 14.2 8Z" fill="#a88880"/><path d="M8 8L1.8 8A6.2 6.2 0 0 0 8 14.2Z" fill="#8a5048"/><path d="M8 8L8 14.2A6.2 6.2 0 0 0 14.2 8Z" fill="#3c3c3c"/><circle cx="5.8" cy="5.4" r="2.4" fill="#fff" opacity=".55"/></svg>
<svg class="a" style="left:359.3px;top:998.7px;" width="7.4" height="14.6" viewBox="0 0 7.4 14.6"><path d="M1 5.8L3.7 1L6.4 5.8Z M1 8.8L3.7 13.6L6.4 8.8Z" fill="#b2b2b2"/></svg>
<div class="a txt r0 emb" style="left:368.5px;top:996px;width:121.5px;height:20px;"></div>
<div class="a t" style="left:377.0px;top:998.7px;font-size:11.4px;color:#000;letter-spacing:-0.006px;">Material</div>
<div class="a tool r0 emb" style="left:489px;top:996px;width:20.8px;height:20px;"></div>
<div class="a t" style="left:495.4px;top:998.7px;font-size:11.4px;color:#000;">F</div>
<div class="a tool r0 emb" style="left:508.8px;top:996px;width:21px;height:20px;"></div>
<svg class="a" style="left:511.3px;top:998px;" width="16" height="16" viewBox="0 0 16 16"><path d="M6.7 2.4h2.6v4.3h4.3v2.6h-4.3v4.3h-2.6v-4.3h-4.3v-2.6h4.3z" fill="#fff" stroke="#1c1c1c" stroke-width=".9" stroke-linejoin="round"/></svg>
<div class="a tool rr emb" style="left:528.8px;top:996px;width:20.7px;height:20px;"></div>
<svg class="a" style="left:530.8px;top:998px;" width="16" height="16" viewBox="0 0 16 16"><path transform="rotate(45 8 8)" d="M6.8 1.6h2.4v5.2h5.2v2.4h-5.2v5.2h-2.4v-5.2h-5.2v-2.4h5.2z" fill="#fff" stroke="#1c1c1c" stroke-width=".9" stroke-linejoin="round"/></svg>
<div class="a opt emb" style="left:558.5px;top:999px;width:14px;height:14px;"></div>
<svg class="a" style="left:559px;top:995.5px;" width="16" height="16" viewBox="0 0 16 16"><path d="M3.6 8.4L6.8 11.8L12.8 3" fill="none" stroke="#111" stroke-width="3.2" stroke-linecap="round" stroke-linejoin="round" opacity=".5"/><path d="M3.6 8.4L6.8 11.8L12.8 3" fill="none" stroke="#fff" stroke-width="1.8" stroke-linecap="round" stroke-linejoin="round"/></svg>
<div class="a t" style="left:580.5px;top:998.7px;font-size:11.4px;color:#fff;letter-spacing:-0.377px;">Use Nodes</div>
<div class="a tool emb" style="left:647px;top:996px;width:19.5px;height:20px;"></div>
<svg class="a" style="left:648.8px;top:998px;" width="16" height="16" viewBox="0 0 16 16"><g transform="translate(9 7) rotate(45)"><path d="M0 0.5V8" stroke="#222" stroke-width="2" stroke-linecap="round"/><path d="M0 0.5V7.6" stroke="#e8e8e8" stroke-width=".9" stroke-linecap="round"/><path d="M-3.4 -7.6H3.4V-5.9H2L2.7 -1.6H4.4V0.4H-4.4V-1.6H-2.7L-2 -5.9H-3.4Z" fill="#ececec" stroke="#222" stroke-width="1" stroke-linejoin="round"/></g></svg>
<div class="a tool emb" style="left:672.5px;top:996px;width:19px;height:20px;border-color:#5a5a5a;background:#8a8a8a"></div>
<svg class="a" style="left:674px;top:998px;" width="16" height="16" viewBox="0 0 16 16"><path d="M12.4 13.4H6.4V8.2" fill="none" stroke="#4e4e4e" stroke-width="3.6"/><path d="M1.6 8.8L6.4 2.6L11.2 8.8Z" fill="#4e4e4e"/><path d="M12.4 13.4H6.4V8.2" fill="none" stroke="#b4b4b4" stroke-width="1.7"/><path d="M3.6 7.9L6.4 4.2L9.2 7.9Z" fill="#b4b4b4"/></svg>
<div class="a tool rl emb" style="left:708.3px;top:996px;width:20px;height:20px;border-color:#484848;background:#8f8f8f"></div>
<svg class="a" style="left:710px;top:998px;" width="16" height="16" viewBox="0 0 16 16"><g transform="translate(9.6 6.4) rotate(45)"><path d="M-3.1 6.4V0A3.1 3.1 0 0 1 3.1 0V6.4" fill="none" stroke="#5a5a5a" stroke-width="3.7"/><path d="M-3.1 6.2V0A3.1 3.1 0 0 1 3.1 0V6.2" fill="none" stroke="#a9a9a9" stroke-width="2.1"/></g></svg>
<div class="a menu rr emb" style="left:727.3px;top:996px;width:35.5px;height:20px;"></div>
<svg class="a" style="left:731px;top:998px;" width="16" height="16" viewBox="0 0 16 16"><path d="M5.5 4V15M11.5 4V15M1.5 8.5H15M1.5 13H15" stroke="#f0f0f0" stroke-width="1.15"/><circle cx="5.2" cy="4.6" r="3" fill="#e8f0ff" stroke="#2a2a2a" stroke-width=".5"/><circle cx="5.2" cy="4.6" r="1.8" fill="#2a60e0"/><circle cx="5.2" cy="4.6" r=".7" fill="#cfe0ff"/></svg>
<svg class="a" style="left:752.8px;top:998.7px;" width="7.4" height="14.6" viewBox="0 0 7.4 14.6"><path d="M1 5.8L3.7 1L6.4 5.8Z M1 8.8L3.7 13.6L6.4 8.8Z" fill="#b2b2b2"/></svg>
<div class="a tool rl emb" style="left:768.8px;top:996px;width:19.5px;height:20px;"></div>
<svg class="a" style="left:770.3px;top:998px;" width="16" height="16" viewBox="0 0 16 16"><rect x="4" y="3" width="9" height="9.6" fill="#d8b070" stroke="#3a2808" stroke-width=".9"/><rect x="6.2" y="1.6" width="4.6" height="2.6" fill="#bbb" stroke="#333" stroke-width=".7"/><rect x="5.4" y="5" width="6.2" height="6.2" fill="#f4f4f4" stroke="#555" stroke-width=".5"/><path d="M1 15L6.4 9.6M2.6 9.2H6.8V13.4" fill="none" stroke="#111" stroke-width="2.6"/><path d="M1 15L6.4 9.6M2.6 9.2H6.8V13.4" fill="none" stroke="#fff" stroke-width="1.1"/></svg>
<div class="a tool rr emb" style="left:787.3px;top:996px;width:20.3px;height:20px;"></div>
<svg class="a" style="left:789.5px;top:998px;" width="16" height="16" viewBox="0 0 16 16"><rect x="2" y="3" width="9" height="9.6" fill="#d8b070" stroke="#3a2808" stroke-width=".9"/><rect x="4.2" y="1.6" width="4.6" height="2.6" fill="#bbb" stroke="#333" stroke-width=".7"/><rect x="3.4" y="5" width="6.2" height="6.2" fill="#f4f4f4" stroke="#555" stroke-width=".5"/><path d="M9.4 9.4L14.8 14.8M10.6 15.2H15.2V10.6" fill="none" stroke="#111" stroke-width="2.6"/><path d="M9.4 9.4L14.8 14.8M10.6 15.2H15.2V10.6" fill="none" stroke="#fff" stroke-width="1.1"/></svg>
<div class="a menu emb" style="left:1342.3px;top:53px;width:30px;height:20px;"></div>
<svg class="a" style="left:1346.3px;top:55px;" width="16" height="16" viewBox="0 0 16 16"><rect x="2.2" y="1.6" width="5.6" height="2.6" fill="#ffb040" stroke="#7a4a08" stroke-width=".6"/><path d="M4.5 4.5V12.4H8M4.5 8H8" fill="none" stroke="#e8e8e8" stroke-width="1"/><rect x="8" y="6.8" width="5.6" height="2.4" fill="#f4f4f4" stroke="#333" stroke-width=".5"/><rect x="8" y="11.2" width="5.6" height="2.4" fill="#f4f4f4" stroke="#333" stroke-width=".5"/></svg>
<svg class="a" style="left:1362.1px;top:55.7px;" width="7.4" height="14.6" viewBox="0 0 7.4 14.6"><path d="M1 5.8L3.7 1L6.4 5.8Z M1 8.8L3.7 13.6L6.4 8.8Z" fill="#b2b2b2"/></svg>
<div class="a t" style="left:1385.3px;top:55.7px;font-size:11.4px;color:#000;letter-spacing:-0.001px;">View</div>
<div class="a t" style="left:1429.5px;top:55.7px;font-size:11.4px;color:#000;letter-spacing:-0.353px;">Search</div>
<div class="a menu emb" style="left:1476.4px;top:53px;width:118.5px;height:20px;"></div>
<div class="a t" style="left:1484.0px;top:55.7px;font-size:11.4px;color:#fff;letter-spacing:-0.186px;">All Scenes</div>
<svg class="a" style="left:1584.8px;top:55.7px;" width="7.4" height="14.6" viewBox="0 0 7.4 14.6"><path d="M1 5.8L3.7 1L6.4 5.8Z M1 8.8L3.7 13.6L6.4 8.8Z" fill="#b2b2b2"/></svg>
<div class="a " style="left:1600.3px;top:53px;width:76px;height:21px;overflow:hidden"><div class="a txt emb" style="left:0;top:0;width:100px;height:20px"></div></div>
<svg class="a" style="left:1604px;top:55px;" width="16" height="16" viewBox="0 0 16 16"><path d="M7.2 9.2L2 14.6" stroke="#7a3a10" stroke-width="3" stroke-linecap="round"/><path d="M7.2 9.2L2 14.6" stroke="#d87830" stroke-width="1.5" stroke-linecap="round"/><circle cx="10" cy="6" r="4.6" fill="#e8ecf4" fill-opacity=".85" stroke="#444" stroke-width="1.2"/><path d="M7.6 5Q8.4 3 10.4 3" fill="none" stroke="#fff" stroke-width="1.2"/></svg>
<svg class="a" style="left:1662px;top:50px;" width="14" height="14" viewBox="0 0 14 14"><path d="M2 0L14 12M6 0L14 8M10 0L14 4" stroke="#222" stroke-width="1.1" opacity=".75"/><path d="M3.2 0L14 10.8M7.2 0L14 6.8M11.2 0L14 2.8" stroke="#c8c8c8" stroke-width=".9" opacity=".55"/></svg>
<div class="a menu emb" style="left:1342.3px;top:221px;width:30px;height:20px;"></div>
<svg class="a" style="left:1346.3px;top:223px;" width="16" height="16" viewBox="0 0 16 16"><rect x="1.5" y="2.6" width="13" height="4.2" rx="2" fill="#f4f4f4" stroke="#222" stroke-width=".9"/><rect x="1.5" y="9.2" width="13" height="4.2" rx="2" fill="#f4f4f4" stroke="#222" stroke-width=".9"/><rect x="9" y="3.6" width="4.4" height="2.2" rx="1" fill="#333"/><rect x="2.6" y="10.2" width="4.4" height="2.2" rx="1" fill="#333"/></svg>
<svg class="a" style="left:1362.1px;top:223.7px;" width="7.4" height="14.6" viewBox="0 0 7.4 14.6"><path d="M1 5.8L3.7 1L6.4 5.8Z M1 8.8L3.7 13.6L6.4 8.8Z" fill="#b2b2b2"/></svg>
<div class="a menu emb" style="left:1379px;top:221px;width:241px;height:20px;"></div>
<svg class="a" style="left:1381.5px;top:223px;" width="16" height="16" viewBox="0 0 16 16"><rect x="1.8" y="4.8" width="12.4" height="9" rx="1" fill="#e4e4e4" stroke="#1c1c1c" stroke-width="1.1"/><rect x="3.2" y="2.8" width="4" height="2" fill="#bbb" stroke="#1c1c1c" stroke-width=".8"/><circle cx="8.4" cy="9.4" r="3.1" fill="#666" stroke="#1c1c1c" stroke-width=".9"/><circle cx="8.4" cy="9.4" r="1.6" fill="#c84040"/><rect x="11.4" y="6" width="1.8" height="1.4" fill="#555"/></svg>
<div class="a " style="left:1399.2px;top:222px;width:1px;height:18px;background:#1e1e1e"></div>
<svg class="a" style="left:1401.5px;top:223px;" width="16" height="16" viewBox="0 0 16 16"><rect x="5.5" y="4.5" width="9" height="9.5" fill="#d8d0b8" stroke="#222" stroke-width=".9" transform="rotate(12 10 9)"/><rect x="3.5" y="3" width="9" height="9.5" fill="#e8e4d8" stroke="#222" stroke-width=".9" transform="rotate(5 8 8)"/><rect x="1.5" y="1.5" width="9.5" height="9.5" fill="#fafafa" stroke="#222" stroke-width="1"/><rect x="3" y="3" width="6.5" height="6.5" fill="#b8c8e8"/><path d="M5 8.5L6.2 4H8.2V7.6Q7.4 9.6 5 8.5Z" fill="#2a56b8"/></svg>
<div class="a " style="left:1419.2px;top:222px;width:1px;height:18px;background:#1e1e1e"></div>
<svg class="a" style="left:1421.5px;top:223px;" width="16" height="16" viewBox="0 0 16 16"><rect x="8.6" y="3.2" width="4.6" height="8.6" rx="2" fill="#3f78c8" stroke="#16305e" stroke-width=".8"/><ellipse cx="10.9" cy="4.2" rx="2.2" ry="1.1" fill="#9cc0f0"/><circle cx="6.1" cy="11" r="3.4" fill="#e8e8e8" stroke="#1a1a1a" stroke-width="1"/><circle cx="5" cy="9.9" r="1.3" fill="#fff"/><circle cx="3.2" cy="3.4" r="1.7" fill="#f4f08a" stroke="#8a8a30" stroke-width=".5"/></svg>
<div class="a " style="left:1439.2px;top:222px;width:1px;height:18px;background:#1e1e1e"></div>
<svg class="a" style="left:1441.5px;top:223px;" width="16" height="16" viewBox="0 0 16 16"><circle cx="8" cy="8" r="6.4" fill="#3f74c0" stroke="#1a2a48" stroke-width="1"/><path d="M3.5 5Q5 2.6 7.6 2.6Q8.6 4 7 5Q7.4 6.6 5.6 7Q4.4 8.6 3 7.4Z" fill="#5fb85a"/><path d="M8.8 7.4Q11 6 12.8 7.6Q13.6 10 11.4 12.6Q9.6 12.6 9.6 10.6Q8 9.2 8.8 7.4Z" fill="#5fb85a"/><path d="M4.6 10.4Q6.4 10 6.8 11.8Q6.4 13.4 5 12.6Z" fill="#5fb85a"/><path d="M3.2 4.6Q5.6 2 9 2.4" fill="none" stroke="#cfe0f8" stroke-width="1" opacity=".7"/></svg>
<div class="a " style="left:1459.2px;top:222px;width:1px;height:18px;background:#1e1e1e"></div>
<svg class="a" style="left:1461.5px;top:223px;" width="16" height="16" viewBox="0 0 16 16"><path d="M2.2 4.6L8 2.2L13.8 4.6V11.2L8 14L2.2 11.2Z" fill="#d09850" stroke="#6a3a08" stroke-width="1" stroke-linejoin="round"/><path d="M2.2 4.6L8 7L13.8 4.6L8 2.2Z" fill="#ecd0a4"/><path d="M8 7V14L13.8 11.2V4.6Z" fill="#b07c38"/><path d="M2.2 4.6L8 7L13.8 4.6M8 7V14" fill="none" stroke="#6a3a08" stroke-width=".7"/></svg>
<div class="a " style="left:1479.2px;top:222px;width:1px;height:18px;background:#1e1e1e"></div>
<svg class="a" style="left:1481.5px;top:223px;" width="16" height="16" viewBox="0 0 16 16"><rect x="1.6" y="6.6" width="8" height="5" rx="2.5" fill="none" stroke="#222" stroke-width="2.6" transform="rotate(-35 5.6 9.1)"/><rect x="1.6" y="6.6" width="8" height="5" rx="2.5" fill="none" stroke="#d8d8d8" stroke-width="1.2" transform="rotate(-35 5.6 9.1)"/><rect x="6.4" y="4.2" width="8" height="5" rx="2.5" fill="none" stroke="#222" stroke-width="2.6" transform="rotate(-35 10.4 6.7)"/><rect x="6.4" y="4.2" width="8" height="5" rx="2.5" fill="none" stroke="#d8d8d8" stroke-width="1.2" transform="rotate(-35 10.4 6.7)"/></svg>
<div class="a " style="left:1499.2px;top:222px;width:1px;height:18px;background:#1e1e1e"></div>
<svg class="a" style="left:1501.5px;top:223px;" width="16" height="16" viewBox="0 0 16 16"><path d="M2 13.6L8.6 7Q7.6 4 9.8 2.2Q11.4 1.2 13 1.8L10.6 4.2L11.8 5.6L14.2 3.2Q15 5.4 13.4 7Q11.6 8.4 9.6 7.8L3.4 14.6Q2 15 2 13.6Z" fill="#6a94d0" stroke="#1c2c50" stroke-width=".9" stroke-linejoin="round"/></svg>
<div class="a sel r0" style="left:1519.2px;top:221px;width:20.5px;height:20px;"></div>
<svg class="a" style="left:1521.5px;top:223px;" width="16" height="16" viewBox="0 0 16 16"><path d="M2.8 3.4H13.2L8 13Z" fill="none" stroke="#111" stroke-width="2.2"/><path d="M2.8 3.4H13.2L8 13Z" fill="none" stroke="#e4e4e4" stroke-width="1"/><circle cx="2.8" cy="3.4" r="1.6" fill="#fff" stroke="#111" stroke-width=".8"/><circle cx="13.2" cy="3.4" r="1.6" fill="#fff" stroke="#111" stroke-width=".8"/><circle cx="8" cy="13" r="1.6" fill="#fff" stroke="#111" stroke-width=".8"/></svg>
<div class="a " style="left:1539.2px;top:222px;width:1px;height:18px;background:#1e1e1e"></div>
<svg class="a" style="left:1541.5px;top:223px;" width="16" height="16" viewBox="0 0 16 16"><circle cx="8" cy="8" r="6.2" fill="#6a6a6a" stroke="#222" stroke-width="1"/><path d="M8 8L8 1.8A6.2 6.2 0 0 1 14.2 8Z" fill="#a88880"/><path d="M8 8L1.8 8A6.2 6.2 0 0 0 8 14.2Z" fill="#8a5048"/><path d="M8 8L8 14.2A6.2 6.2 0 0 0 14.2 8Z" fill="#3c3c3c"/><circle cx="5.8" cy="5.4" r="2.4" fill="#fff" opacity=".55"/></svg>
<div class="a " style="left:1559.2px;top:222px;width:1px;height:18px;background:#1e1e1e"></div>
<svg class="a" style="left:1561.5px;top:223px;" width="16" height="16" viewBox="0 0 16 16"><rect x="1.8" y="1.8" width="12.4" height="12.4" fill="#cfcfcf" stroke="#333" stroke-width=".9"/><path d="M2.3 2.3h2.85v2.85h-2.85zM8 2.3h2.85v2.85h-2.85zM5.15 5.15h2.85v2.85h-2.85zM10.85 5.15h2.85v2.85h-2.85zM2.3 8h2.85v2.85h-2.85zM8 8h2.85v2.85h-2.85zM5.15 10.85h2.85v2.85h-2.85zM10.85 10.85h2.85v2.85h-2.85z" fill="#8e3030"/></svg>
<div class="a " style="left:1579.2px;top:222px;width:1px;height:18px;background:#1e1e1e"></div>
<svg class="a" style="left:1581.5px;top:223px;" width="16" height="16" viewBox="0 0 16 16"><path d="M4.5 0.5L5.4 3.6L8.5 4.5L5.4 5.4L4.5 8.5L3.6 5.4L0.5 4.5L3.6 3.6Z" fill="#f8f0c0" stroke="#5a5020" stroke-width=".5"/><path d="M11.5 1.5L12.3 4.2L15 5L12.3 5.8L11.5 8.5L10.7 5.8L8 5L10.7 4.2Z" fill="#f8f0c0" stroke="#5a5020" stroke-width=".5"/><path d="M5 8.5L5.8 11.2L8.5 12L5.8 12.8L5 15.5L4.2 12.8L1.5 12L4.2 11.2Z" fill="#f8f0c0" stroke="#5a5020" stroke-width=".5"/><path d="M11.5 8.5L12.3 11.2L15 12L12.3 12.8L11.5 15.5L10.7 12.8L8 12L10.7 11.2Z" fill="#f8f0c0" stroke="#5a5020" stroke-width=".5"/></svg>
<div class="a " style="left:1599.2px;top:222px;width:1px;height:18px;background:#1e1e1e"></div>
<svg class="a" style="left:1601.5px;top:223px;" width="16" height="16" viewBox="0 0 16 16"><path d="M1.6 7.4L4 5.6L7 9.8L12 2.6" fill="none" stroke="#1c2c50" stroke-width="3.2" stroke-linejoin="round"/><path d="M1.6 7.4L4 5.6L7 9.8L12 2.6" fill="none" stroke="#5a88d0" stroke-width="1.7" stroke-linejoin="round"/><circle cx="12.4" cy="3.4" r="2.4" fill="#e8e8e8" stroke="#333" stroke-width=".7"/></svg>
<svg class="a" style="left:1662px;top:218px;" width="14" height="14" viewBox="0 0 14 14"><path d="M2 0L14 12M6 0L14 8M10 0L14 4" stroke="#222" stroke-width="1.1" opacity=".75"/><path d="M3.2 0L14 10.8M7.2 0L14 6.8M11.2 0L14 2.8" stroke="#c8c8c8" stroke-width=".9" opacity=".55"/></svg>
<div class="a " style="left:4px;top:50px;width:19.5px;height:277px;background:#464646"></div>
<div class="a " style="left:7px;top:56px;width:17px;height:27px;background:#727272;border:1px solid #3c3c3c;border-right:none;border-radius:4px 0 0 4px"></div>
<div class="a t" style="left:-25.7px;top:61.5px;width:80px;text-align:center;transform:rotate(-90deg);transform-origin:40px 8px;font-size:11.4px">Too</div>
<div class="a " style="left:8px;top:86.5px;width:15.5px;height:33.5px;background:#5c5c5c;border:1px solid #3c3c3c;border-right:1px solid #3a3a3a;border-radius:4px 0 0 4px"></div>
<div class="a t" style="left:-25.7px;top:95.25px;width:80px;text-align:center;transform:rotate(-90deg);transform-origin:40px 8px;font-size:11.4px">Crea</div>
<div class="a " style="left:8px;top:125px;width:15.5px;height:42.5px;background:#5c5c5c;border:1px solid #3c3c3c;border-right:1px solid #3a3a3a;border-radius:4px 0 0 4px"></div>
<div class="a t" style="left:-25.7px;top:138.25px;width:80px;text-align:center;transform:rotate(-90deg);transform-origin:40px 8px;font-size:11.4px">Relati</div>
<div class="a " style="left:8px;top:171.5px;width:15.5px;height:46px;background:#5c5c5c;border:1px solid #3c3c3c;border-right:1px solid #3a3a3a;border-radius:4px 0 0 4px"></div>
<div class="a t" style="left:-25.7px;top:186.5px;width:80px;text-align:center;transform:rotate(-90deg);transform-origin:40px 8px;font-size:11.4px">Animat</div>
<div class="a " style="left:8px;top:222.5px;width:15.5px;height:36px;background:#5c5c5c;border:1px solid #3c3c3c;border-right:1px solid #3a3a3a;border-radius:4px 0 0 4px"></div>
<div class="a t" style="left:-25.7px;top:232.5px;width:80px;text-align:center;transform:rotate(-90deg);transform-origin:40px 8px;font-size:11.4px">Physi</div>
<div class="a " style="left:8px;top:263.5px;width:15.5px;height:60px;background:#5c5c5c;border:1px solid #3c3c3c;border-right:1px solid #3a3a3a;border-radius:4px 0 0 4px"></div>
<div class="a t" style="left:-25.7px;top:285.5px;width:80px;text-align:center;transform:rotate(-90deg);transform-origin:40px 8px;font-size:11.4px">Grease Pe</div>
<div class="a " style="left:146.5px;top:55px;width:12px;height:268px;background:#585858;border:1px solid #3a3a3a;border-radius:6px"></div>
<div class="a " style="left:147.5px;top:56px;width:10px;height:157px;background:linear-gradient(90deg,#8e8e8e,#747474);border-radius:5px"></div>
<svg class="a" style="left:36.3px;top:57.5px;" width="10" height="10" viewBox="0 0 10 10"><path d="M0.6 1H9.2L4.9 9.4Z" fill="#1a1a1a"/></svg>
<div class="a t" style="left:49.3px;top:55.0px;font-size:12.3px;color:#000;letter-spacing:0.046px;">Transform</div>
<svg class="a" style="left:119.8px;top:52.5px;" width="18" height="18" viewBox="0 0 18 18"><path d="M0 0L16.6 16.6M5.8 0L17.5 11.7M11.6 0L17.5 5.9" stroke="#595959" stroke-width="1" opacity=".9"/><path d="M0 1.2L15.9 17.1M5.8 1.2L17.2 12.6M11.6 1.2L17.2 6.8" stroke="#8e8e8e" stroke-width="1" opacity=".9"/></svg>
<div class="a tool rt" style="left:32px;top:82px;width:106px;height:20px;"></div>
<div class="a t" style="left:39.5px;top:84.8px;font-size:11.4px;color:#000;">Translate</div>
<div class="a tool r0" style="left:32px;top:102px;width:106px;height:20px;border-top:none;"></div>
<div class="a t" style="left:39.5px;top:104.8px;font-size:11.4px;color:#000;">Rotate</div>
<div class="a tool rb emb" style="left:32px;top:122px;width:106px;height:20px;border-top:none;"></div>
<div class="a t" style="left:39.5px;top:124.8px;font-size:11.4px;color:#000;">Scale</div>
<div class="a tool emb" style="left:32px;top:147px;width:106px;height:20px;"></div>
<div class="a t" style="left:39.5px;top:149.8px;font-size:11.4px;color:#000;">Mirror</div>
<div class="a " style="left:29px;top:174.5px;width:112px;height:1px;background:#5e5e5e"></div>
<div class="a " style="left:29px;top:175.5px;width:112px;height:1px;background:#828282"></div>
<svg class="a" style="left:36.3px;top:182.5px;" width="10" height="10" viewBox="0 0 10 10"><path d="M0.6 1H9.2L4.9 9.4Z" fill="#1a1a1a"/></svg>
<div class="a t" style="left:49.3px;top:180.0px;font-size:12.3px;color:#000;letter-spacing:-0.049px;">Edit</div>
<svg class="a" style="left:119.8px;top:177.5px;" width="18" height="18" viewBox="0 0 18 18"><path d="M0 0L16.6 16.6M5.8 0L17.5 11.7M11.6 0L17.5 5.9" stroke="#595959" stroke-width="1" opacity=".9"/><path d="M0 1.2L15.9 17.1M5.8 1.2L17.2 12.6M11.6 1.2L17.2 6.8" stroke="#8e8e8e" stroke-width="1" opacity=".9"/></svg>
<div class="a tool rt" style="left:32px;top:207px;width:106px;height:20px;"></div>
<div class="a t" style="left:39.5px;top:209.8px;font-size:11.4px;color:#000;">Duplicate</div>
<div class="a tool r0" style="left:32px;top:227px;width:106px;height:20px;border-top:none;"></div>
<div class="a t" style="left:39.5px;top:229.8px;font-size:11.4px;color:#000;">Duplicate Linked</div>
<div class="a tool rb emb" style="left:32px;top:247px;width:106px;height:20px;border-top:none;"></div>
<div class="a t" style="left:39.5px;top:249.8px;font-size:11.4px;color:#000;">Delete</div>
<div class="a tool emb" style="left:32px;top:272px;width:106px;height:20px;"></div>
<div class="a t" style="left:39.5px;top:274.8px;font-size:11.4px;color:#000;">Join</div>
<div class="a menu emb" style="left:32px;top:297px;width:106px;height:20px;"></div>
<div class="a t" style="left:40.0px;top:299.8px;font-size:11.4px;color:#fff;">Set Origin</div>
<svg class="a" style="left:127.8px;top:299.9px;" width="7.4" height="14.6" viewBox="0 0 7.4 14.6"><path d="M1 5.8L3.7 1L6.4 5.8Z M1 8.8L3.7 13.6L6.4 8.8Z" fill="#b2b2b2"/></svg>
<div class="a " style="left:4px;top:327px;width:159px;height:1px;background:#5a5a5a"></div>
<div class="a " style="left:4px;top:328px;width:159px;height:1px;background:#7e7e7e"></div>
<svg class="a" style="left:15.5px;top:335px;" width="10" height="10" viewBox="0 0 10 10"><path d="M0.6 1H9.2L4.9 9.4Z" fill="#1a1a1a"/></svg>
<div class="a t" style="left:28.5px;top:333.1px;font-size:12.3px;color:#000;letter-spacing:-0.254px;">Link Nodes</div>
<svg class="a" style="left:136.6px;top:330.2px;" width="18" height="18" viewBox="0 0 18 18"><g clip-path="inset(0 0 0 3.6px)"><path d="M0 0L16.6 16.6M5.8 0L17.5 11.7M11.6 0L17.5 5.9" stroke="#595959" stroke-width="1" opacity=".9"/><path d="M0 1.2L15.9 17.1M5.8 1.2L17.2 12.6M11.6 1.2L17.2 6.8" stroke="#8e8e8e" stroke-width="1" opacity=".9"/></g></svg>
<svg class="a" style="left:4px;top:570px;" width="1147" height="422" viewBox="0 0 1147 422"><defs><pattern id="gr" x="4.2" y="21.2" width="21.725" height="21.74" patternUnits="userSpaceOnUse"><path d="M0.5 0V21.74M0 0.5H21.74" stroke="#2b2b2b" stroke-width="1"/></pattern></defs><rect width="1131.5" height="405" fill="url(#gr)"/><path d="M497 100.5C596 100.5 596 125.8 695.5 125.8" fill="none" stroke="#1c1c1c" stroke-width="3.2"/><path d="M497 100.5C596 100.5 596 125.8 695.5 125.8" fill="none" stroke="#e6e6e6" stroke-width="1.5"/></svg>
<div class="a " style="left:4px;top:592px;width:13px;height:14px;background:rgba(30,30,30,.45);border-radius:0 4px 4px 0"></div>
<svg class="a" style="left:6px;top:595px;" width="8" height="8" viewBox="0 0 8 8"><path d="M4 0.5v7M0.5 4h7" stroke="#9a9a9a" stroke-width="2"/></svg>
<div class="a " style="left:327px;top:631.5px;width:174.3px;height:268.7px;border-radius:7px;box-shadow:0 2px 7px 2px rgba(0,0,0,.55);background:rgba(99,99,99,.94)"></div>
<div class="a " style="left:327px;top:631.5px;width:174.3px;height:22.5px;border-radius:7px 7px 0 0;background:rgba(122,122,122,.5)"></div>
<svg class="a" style="left:335px;top:640px;" width="10" height="10" viewBox="0 0 10 10"><path d="M0.6 0.8H9.6L5.1 9.6Z" fill="#5a5a5a"/></svg>
<div class="a t" style="left:351.0px;top:637.4px;font-size:11.4px;color:#000;letter-spacing:-0.104px;">Octane Diffuse Mat</div>
<div class="a t" style="left:440.0px;top:665.3px;font-size:11.4px;color:#000;letter-spacing:-0.063px;">OutMat</div>
<svg class="a" style="left:495.2px;top:664.5px;" width="12" height="12" viewBox="0 0 12 12"><circle cx="6" cy="6" r="5.1" fill="#63c763" stroke="#1c1c1c" stroke-width=".8"/></svg>
<svg class="a" style="left:321.2px;top:686.8px;" width="12" height="12" viewBox="0 0 12 12"><circle cx="6" cy="6" r="5.1" fill="#ccb431" stroke="#1c1c1c" stroke-width=".8"/></svg>
<div class="a " style="left:338px;top:682.5px;width:31.5px;height:21px;background:#c6e60c;border:1px solid #222;border-radius:4px"></div>
<div class="a t" style="left:387.0px;top:686.4px;font-size:11.4px;color:#000;letter-spacing:-0.111px;">Diffuse</div>
<svg class="a" style="left:321.2px;top:710.8px;" width="12" height="12" viewBox="0 0 12 12"><circle cx="6" cy="6" r="5.1" fill="#a1a1a1" stroke="#1c1c1c" stroke-width=".8"/></svg>
<div class="a num emb" style="left:338px;top:706.2px;width:150.5px;height:21px;"></div>
<svg class="a" style="left:345.5px;top:712.2px;" width="5" height="9" viewBox="0 0 5 9"><path d="M4.5 0.8V8.2L0.8 4.5Z" fill="#6e6e6e"/></svg>
<svg class="a" style="left:475.5px;top:712.2px;" width="5" height="9" viewBox="0 0 5 9"><path d="M0.5 0.8V8.2L4.2 4.5Z" fill="#6e6e6e"/></svg>
<div class="a t" style="left:354.5px;top:709.8px;font-size:11.4px;color:#000;letter-spacing:-0.294px;">Transmission:</div>
<div class="a t" style="left:440.7px;top:709.8px;font-size:11.4px;color:#000;letter-spacing:0.254px;">0.000</div>
<svg class="a" style="left:321.2px;top:734.8px;" width="12" height="12" viewBox="0 0 12 12"><circle cx="6" cy="6" r="5.1" fill="#a1a1a1" stroke="#1c1c1c" stroke-width=".8"/></svg>
<div class="a num emb" style="left:338px;top:730.2px;width:150.5px;height:21px;"></div>
<svg class="a" style="left:345.5px;top:736.2px;" width="5" height="9" viewBox="0 0 5 9"><path d="M4.5 0.8V8.2L0.8 4.5Z" fill="#6e6e6e"/></svg>
<svg class="a" style="left:475.5px;top:736.2px;" width="5" height="9" viewBox="0 0 5 9"><path d="M0.5 0.8V8.2L4.2 4.5Z" fill="#6e6e6e"/></svg>
<div class="a t" style="left:354.5px;top:733.8px;font-size:11.4px;color:#000;letter-spacing:-0.250px;">Bump:</div>
<div class="a t" style="left:440.7px;top:733.8px;font-size:11.4px;color:#000;letter-spacing:0.254px;">0.000</div>
<svg class="a" style="left:321.2px;top:758.8px;" width="12" height="12" viewBox="0 0 12 12"><circle cx="6" cy="6" r="5.1" fill="#a1a1a1" stroke="#1c1c1c" stroke-width=".8"/></svg>
<div class="a num emb" style="left:338px;top:754.2px;width:150.5px;height:21px;"></div>
<svg class="a" style="left:345.5px;top:760.2px;" width="5" height="9" viewBox="0 0 5 9"><path d="M4.5 0.8V8.2L0.8 4.5Z" fill="#6e6e6e"/></svg>
<svg class="a" style="left:475.5px;top:760.2px;" width="5" height="9" viewBox="0 0 5 9"><path d="M0.5 0.8V8.2L4.2 4.5Z" fill="#6e6e6e"/></svg>
<div class="a t" style="left:354.5px;top:757.8px;font-size:11.4px;color:#000;letter-spacing:-0.029px;">Normal:</div>
<div class="a t" style="left:440.7px;top:757.8px;font-size:11.4px;color:#000;letter-spacing:0.254px;">0.000</div>
<svg class="a" style="left:321.2px;top:782.8px;" width="12" height="12" viewBox="0 0 12 12"><circle cx="6" cy="6" r="5.1" fill="#a1a1a1" stroke="#1c1c1c" stroke-width=".8"/></svg>
<div class="a num emb" style="left:338px;top:778.2px;width:150.5px;height:21px;"></div>
<svg class="a" style="left:345.5px;top:784.2px;" width="5" height="9" viewBox="0 0 5 9"><path d="M4.5 0.8V8.2L0.8 4.5Z" fill="#6e6e6e"/></svg>
<svg class="a" style="left:475.5px;top:784.2px;" width="5" height="9" viewBox="0 0 5 9"><path d="M0.5 0.8V8.2L4.2 4.5Z" fill="#6e6e6e"/></svg>
<div class="a t" style="left:354.5px;top:781.8px;font-size:11.4px;color:#000;letter-spacing:-0.014px;">Opacity:</div>
<div class="a t" style="left:440.7px;top:781.8px;font-size:11.4px;color:#000;letter-spacing:0.254px;">1.000</div>
<svg class="a" style="left:321.2px;top:806.8px;" width="12" height="12" viewBox="0 0 12 12"><circle cx="6" cy="6" r="5.1" fill="#ccb431" stroke="#1c1c1c" stroke-width=".8"/></svg>
<div class="a opt emb" style="left:340.5px;top:805.5px;width:15px;height:15px;"></div>
<div class="a t" style="left:363.5px;top:806.1px;font-size:11.4px;color:#000;letter-spacing:-0.215px;">Smooth</div>
<svg class="a" style="left:321.2px;top:830.8px;" width="12" height="12" viewBox="0 0 12 12"><circle cx="6" cy="6" r="5.1" fill="#63c763" stroke="#1c1c1c" stroke-width=".8"/></svg>
<div class="a t" style="left:345.5px;top:830.0px;font-size:11.4px;color:#000;letter-spacing:-0.281px;">Emission</div>
<svg class="a" style="left:321.2px;top:854.8px;" width="12" height="12" viewBox="0 0 12 12"><circle cx="6" cy="6" r="5.1" fill="#63c763" stroke="#1c1c1c" stroke-width=".8"/></svg>
<div class="a t" style="left:345.5px;top:854.0px;font-size:11.4px;color:#000;letter-spacing:-0.091px;">Medium</div>
<svg class="a" style="left:321.2px;top:878.8px;" width="12" height="12" viewBox="0 0 12 12"><circle cx="6" cy="6" r="5.1" fill="#ccb431" stroke="#1c1c1c" stroke-width=".8"/></svg>
<div class="a opt emb" style="left:340.5px;top:877.5px;width:14.5px;height:15px;"></div>
<div class="a t" style="left:362.5px;top:877.9px;font-size:11.4px;color:#000;letter-spacing:0.098px;">Matte</div>
<div class="a " style="left:699.5px;top:663px;width:152.2px;height:97.3px;border-radius:7px;box-shadow:0 2px 7px 2px rgba(0,0,0,.55);background:rgba(100,100,100,.93)"></div>
<div class="a " style="left:699.5px;top:663px;width:152.2px;height:21.7px;border-radius:7px 7px 0 0;background:rgba(80,80,80,.55)"></div>
<div class="a " style="left:698.8px;top:662.3px;width:153.6px;height:98.7px;border-radius:7.5px;border:1.4px solid #f0a13c"></div>
<svg class="a" style="left:705px;top:671px;" width="11" height="11" viewBox="0 0 11 11"><path d="M0.6 0.8H10.2L5.4 10.4Z" fill="#d2611c"/></svg>
<div class="a t" style="left:722.0px;top:668.0px;font-size:11.4px;color:#000;letter-spacing:0.004px;">Material Output</div>
<svg class="a" style="left:693.5px;top:689.8px;" width="12" height="12" viewBox="0 0 12 12"><circle cx="6" cy="6" r="5.1" fill="#63c763" stroke="#1c1c1c" stroke-width=".8"/></svg>
<div class="a t" style="left:717.5px;top:689.7px;font-size:11.4px;color:#000;letter-spacing:-0.327px;">Surface</div>
<svg class="a" style="left:693.5px;top:713.8px;" width="12" height="12" viewBox="0 0 12 12"><circle cx="6" cy="6" r="5.1" fill="#63c763" stroke="#1c1c1c" stroke-width=".8"/></svg>
<div class="a t" style="left:717.5px;top:713.8px;font-size:11.4px;color:#000;letter-spacing:-0.004px;">Volume</div>
<svg class="a" style="left:693.5px;top:737.8px;" width="12" height="12" viewBox="0 0 12 12"><circle cx="6" cy="6" r="5.1" fill="#a1a1a1" stroke="#1c1c1c" stroke-width=".8"/></svg>
<div class="a t" style="left:717.5px;top:737.2px;font-size:11.4px;color:#000;letter-spacing:-0.005px;">Displacement</div>
<div class="a t" style="left:33.8px;top:950.0px;font-size:11.4px;color:#fff;letter-spacing:-0.006px;">Material</div>
<div class="a " style="left:8px;top:975.5px;width:1121.5px;height:12px;background:linear-gradient(#969696,#787878);border-radius:6px;box-shadow:0 1px 0 #2c2c2c,0 2px 0 #464646"></div>
<div class="a " style="left:1135.5px;top:574.5px;width:12px;height:395.5px;background:linear-gradient(90deg,#969696,#787878);border-radius:6px;box-shadow:1px 0 0 #2c2c2c,2px 0 0 #464646"></div>
<svg class="a" style="left:1164.5px;top:577.5px;" width="10" height="10" viewBox="0 0 10 10"><path d="M0.6 1H9.2L4.9 9.4Z" fill="#1a1a1a"/></svg>
<div class="a opt emb" style="left:1177px;top:575px;width:14px;height:14px;"></div>
<svg class="a" style="left:1177.5px;top:572.5px;" width="15" height="15" viewBox="0 0 16 16"><path d="M3.6 8.4L6.8 11.8L12.8 3" fill="none" stroke="#111" stroke-width="3.2" stroke-linecap="round" stroke-linejoin="round" opacity=".5"/><path d="M3.6 8.4L6.8 11.8L12.8 3" fill="none" stroke="#fff" stroke-width="1.8" stroke-linecap="round" stroke-linejoin="round"/></svg>
<div class="a t" style="left:1197.5px;top:574.7px;font-size:12.3px;color:#000;letter-spacing:-0.135px;">Grease Pencil</div>
<svg class="a" style="left:1305.7px;top:572.3px;" width="18" height="18" viewBox="0 0 18 18"><path d="M0 0L16.6 16.6M5.8 0L17.5 11.7M11.6 0L17.5 5.9" stroke="#595959" stroke-width="1" opacity=".9"/><path d="M0 1.2L15.9 17.1M5.8 1.2L17.2 12.6M11.6 1.2L17.2 6.8" stroke="#8e8e8e" stroke-width="1" opacity=".9"/></svg>
<svg class="a" style="left:1318px;top:570px;" width="14" height="14" viewBox="0 0 14 14"><path d="M2 0L14 12M6 0L14 8M10 0L14 4" stroke="#222" stroke-width="1.1" opacity=".75"/><path d="M3.2 0L14 10.8M7.2 0L14 6.8M11.2 0L14 2.8" stroke="#c8c8c8" stroke-width=".9" opacity=".55"/></svg>
<div class="a menu rl emb" style="left:1160px;top:607px;width:32px;height:20px;"></div>
<svg class="a" style="left:1164px;top:609px;" width="16" height="16" viewBox="0 0 16 16"><path d="M2 14L3 10.6L11.4 2.2L13.8 4.6L5.4 13Z" fill="#8ac030" stroke="#2a3a10" stroke-width=".9" stroke-linejoin="round"/><path d="M11.4 2.2L12.6 1Q13.8.6 14.6 1.6Q15.2 2.6 14.8 3.4L13.8 4.6Z" fill="#e04040" stroke="#501010" stroke-width=".7"/><path d="M2 14L3 10.6L5.4 13Z" fill="#f0d8a0" stroke="#2a3a10" stroke-width=".6"/></svg>
<svg class="a" style="left:1181.8px;top:609.9px;" width="7.4" height="14.6" viewBox="0 0 7.4 14.6"><path d="M1 5.8L3.7 1L6.4 5.8Z M1 8.8L3.7 13.6L6.4 8.8Z" fill="#b2b2b2"/></svg>
<div class="a tool rr emb" style="left:1191px;top:607px;width:132.5px;height:20px;"></div>
<svg class="a" style="left:1195px;top:609px;" width="16" height="16" viewBox="0 0 16 16"><path d="M6.7 2.4h2.6v4.3h4.3v2.6h-4.3v4.3h-2.6v-4.3h-4.3v-2.6h4.3z" fill="#fff" stroke="#1c1c1c" stroke-width=".9" stroke-linejoin="round"/></svg>
<div class="a t" style="left:1254.5px;top:609.9px;font-size:11.4px;color:#000;letter-spacing:-0.102px;">New</div>
<div class="a tool emb" style="left:1160px;top:629px;width:163.5px;height:20px;"></div>
<div class="a t" style="left:1214.5px;top:631.9px;font-size:11.4px;color:#000;letter-spacing:-0.054px;">New Layer</div>
<div class="a tool rl emb" style="left:1160px;top:651px;width:82px;height:20px;background:#7e7e7e;border-color:#505050"></div>
<div class="a t" style="left:1167.5px;top:653.9px;font-size:11.4px;color:#545454;letter-spacing:-0.088px;">Delete Frame</div>
<div class="a tool rr emb" style="left:1241px;top:651px;width:82.5px;height:20px;background:#7e7e7e;border-color:#505050"></div>
<div class="a t" style="left:1262.5px;top:653.9px;font-size:11.4px;color:#545454;letter-spacing:-0.202px;">Convert</div>
<div class="a " style="left:1157px;top:678.5px;width:170px;height:1px;background:#5e5e5e"></div>
<div class="a " style="left:1157px;top:679.5px;width:170px;height:1px;background:#828282"></div>
<svg class="a" style="left:1164.5px;top:686.5px;" width="10" height="10" viewBox="0 0 10 10"><path d="M0.6 1H9.2L4.9 9.4Z" fill="#1a1a1a"/></svg>
<div class="a t" style="left:1177.5px;top:683.7px;font-size:12.3px;color:#000;letter-spacing:-0.351px;">Node</div>
<svg class="a" style="left:1305.7px;top:681.5px;" width="18" height="18" viewBox="0 0 18 18"><path d="M0 0L16.6 16.6M5.8 0L17.5 11.7M11.6 0L17.5 5.9" stroke="#595959" stroke-width="1" opacity=".9"/><path d="M0 1.2L15.9 17.1M5.8 1.2L17.2 12.6M11.6 1.2L17.2 6.8" stroke="#8e8e8e" stroke-width="1" opacity=".9"/></svg>
<div class="a t" style="left:1168.0px;top:714.2px;font-size:11.4px;color:#000;letter-spacing:-0.115px;">Name:</div>
<div class="a txt emb" style="left:1219px;top:711px;width:104.5px;height:20px;"></div>
<svg class="a" style="left:1223px;top:713px;" width="16" height="16" viewBox="0 0 16 16"><rect x="1.5" y="1.5" width="13" height="13" rx="1.2" fill="#f4f4f4" stroke="#222" stroke-width="1"/><path d="M3.4 4h9.2" stroke="#444" stroke-width="1"/><rect x="4" y="6.2" width="4" height="3.6" fill="#666"/><rect x="8" y="9.2" width="3.6" height="3.2" fill="#888"/></svg>
<div class="a t" style="left:1243.5px;top:714.2px;font-size:11.4px;color:#000;letter-spacing:0.027px;">Material Out...</div>
<div class="a t" style="left:1168.0px;top:738.9px;font-size:11.4px;color:#000;letter-spacing:-0.177px;">Label:</div>
<div class="a txt emb" style="left:1219px;top:736px;width:104.5px;height:20px;"></div>
<svg class="a" style="left:1223px;top:738px;" width="16" height="16" viewBox="0 0 16 16"><rect x="1.5" y="1.5" width="13" height="13" rx="1.2" fill="#f4f4f4" stroke="#222" stroke-width="1"/><path d="M3.4 4h9.2" stroke="#444" stroke-width="1"/><rect x="4" y="6.2" width="4" height="3.6" fill="#666"/><rect x="8" y="9.2" width="3.6" height="3.2" fill="#888"/></svg>
<div class="a " style="left:1157px;top:762.5px;width:170px;height:1px;background:#5e5e5e"></div>
<div class="a " style="left:1157px;top:763.5px;width:170px;height:1px;background:#828282"></div>
<svg class="a" style="left:1165.5px;top:771px;" width="10" height="10" viewBox="0 0 10 10"><path d="M1 0.6V9.2L9.4 4.9Z" fill="#1a1a1a"/></svg>
<div class="a opt emb" style="left:1177px;top:769.5px;width:14px;height:14px;"></div>
<div class="a t" style="left:1197.5px;top:768.7px;font-size:12.3px;color:#000;letter-spacing:-0.079px;">Color</div>
<svg class="a" style="left:1305.7px;top:766.3px;" width="18" height="18" viewBox="0 0 18 18"><path d="M0 0L16.6 16.6M5.8 0L17.5 11.7M11.6 0L17.5 5.9" stroke="#595959" stroke-width="1" opacity=".9"/><path d="M0 1.2L15.9 17.1M5.8 1.2L17.2 12.6M11.6 1.2L17.2 6.8" stroke="#8e8e8e" stroke-width="1" opacity=".9"/></svg>
<div class="a " style="left:1157px;top:786.5px;width:170px;height:1px;background:#5e5e5e"></div>
<div class="a " style="left:1157px;top:787.5px;width:170px;height:1px;background:#828282"></div>
<svg class="a" style="left:1164.5px;top:795.5px;" width="10" height="10" viewBox="0 0 10 10"><path d="M0.6 1H9.2L4.9 9.4Z" fill="#1a1a1a"/></svg>
<div class="a t" style="left:1177.5px;top:792.7px;font-size:12.3px;color:#000;letter-spacing:-0.106px;">Properties</div>
<svg class="a" style="left:1305.7px;top:790.3px;" width="18" height="18" viewBox="0 0 18 18"><path d="M0 0L16.6 16.6M5.8 0L17.5 11.7M11.6 0L17.5 5.9" stroke="#595959" stroke-width="1" opacity=".9"/><path d="M0 1.2L15.9 17.1M5.8 1.2L17.2 12.6M11.6 1.2L17.2 6.8" stroke="#8e8e8e" stroke-width="1" opacity=".9"/></svg>
<div class="a t" style="left:1168.0px;top:834.2px;font-size:11.4px;color:#000;letter-spacing:-0.175px;">Inputs:</div>
<div class="a t" style="left:1168.0px;top:859.2px;font-size:11.4px;color:#000;letter-spacing:-0.004px;">Volume</div>
<div class="a t" style="left:1168.0px;top:884.2px;font-size:11.4px;color:#000;letter-spacing:-0.005px;">Displacement</div>
<div class="a " style="left:1333px;top:96.5px;width:267px;height:20.5px;background:#777"></div>
<div class="a " style="left:1333px;top:136.5px;width:267px;height:20.5px;background:#777"></div>
<div class="a " style="left:1333px;top:176.5px;width:267px;height:20.5px;background:#777"></div>
<div class="a " style="left:1333px;top:76.5px;width:267px;height:20px;background:#8b9094"></div>
<div class="a " style="left:1599px;top:76px;width:1px;height:141px;background:#5e5e5e"></div>
<div class="a " style="left:1619px;top:76px;width:1px;height:141px;background:#5e5e5e"></div>
<div class="a " style="left:1639px;top:76px;width:1px;height:141px;background:#5e5e5e"></div>
<div class="a " style="left:1659.5px;top:81px;width:12px;height:122px;background:linear-gradient(90deg,#8c8c8c,#747474);border:1px solid #3a3a3a;border-radius:6px"></div>
<div class="a " style="left:1360px;top:97px;width:1px;height:110px;background:#3c3c3c"></div>
<div class="a " style="left:1346px;top:86.5px;width:12px;height:1px;background:#3c3c3c"></div>
<svg class="a" style="left:1335.5px;top:81px;" width="11" height="11" viewBox="0 0 11 11"><circle cx="5.5" cy="5.5" r="4.1" fill="#f2f2f2" stroke="#1a1a1a" stroke-width="1.1"/><path d="M3.2 5.5H7.8" stroke="#1a1a1a" stroke-width="1.3"/></svg>
<div class="a " style="left:1354px;top:77.5px;width:19px;height:19px;border-radius:50%;background:rgba(225,228,232,.55)"></div>
<svg class="a" style="left:1355.5px;top:78.5px;" width="16" height="16" viewBox="0 0 16 16"><rect x="8.6" y="3.2" width="4.6" height="8.6" rx="2" fill="#3f78c8" stroke="#16305e" stroke-width=".8"/><ellipse cx="10.9" cy="4.2" rx="2.2" ry="1.1" fill="#9cc0f0"/><circle cx="6.1" cy="11" r="3.4" fill="#e8e8e8" stroke="#1a1a1a" stroke-width="1"/><circle cx="5" cy="9.9" r="1.3" fill="#fff"/><circle cx="3.2" cy="3.4" r="1.7" fill="#f4f08a" stroke="#8a8a30" stroke-width=".5"/></svg>
<div class="a t" style="left:1374.0px;top:80.2px;font-size:11.4px;color:#000;letter-spacing:-0.465px;">Scene</div>
<svg class="a" style="left:1360.5px;top:101px;" width="11" height="11" viewBox="0 0 11 11"><circle cx="5.5" cy="5.5" r="4.1" fill="#f2f2f2" stroke="#1a1a1a" stroke-width="1.1"/><path d="M3.2 5.5H7.8 M5.5 3.2V7.8" stroke="#1a1a1a" stroke-width="1.3"/></svg>
<svg class="a" style="left:1376px;top:98.5px;" width="16" height="16" viewBox="0 0 16 16"><rect x="5.5" y="4.5" width="9" height="9.5" fill="#d8d0b8" stroke="#222" stroke-width=".9" transform="rotate(12 10 9)"/><rect x="3.5" y="3" width="9" height="9.5" fill="#e8e4d8" stroke="#222" stroke-width=".9" transform="rotate(5 8 8)"/><rect x="1.5" y="1.5" width="9.5" height="9.5" fill="#fafafa" stroke="#222" stroke-width="1"/><rect x="3" y="3" width="6.5" height="6.5" fill="#b8c8e8"/><path d="M5 8.5L6.2 4H8.2V7.6Q7.4 9.6 5 8.5Z" fill="#2a56b8"/></svg>
<div class="a t" style="left:1394.0px;top:100.2px;font-size:11.4px;color:#000;letter-spacing:-0.259px;">RenderLayers</div>
<div class="a " style="left:1471.7px;top:100px;width:2px;height:13px;background:#3c3c3c"></div>
<div class="a " style="left:1481.5px;top:97.5px;width:18px;height:18px;border-radius:50%;background:rgba(220,220,220,.4)"></div>
<svg class="a" style="left:1482.5px;top:98.5px;" width="16" height="16" viewBox="0 0 16 16"><rect x="5.5" y="4.5" width="9" height="9.5" fill="#d8d0b8" stroke="#222" stroke-width=".9" transform="rotate(12 10 9)"/><rect x="3.5" y="3" width="9" height="9.5" fill="#e8e4d8" stroke="#222" stroke-width=".9" transform="rotate(5 8 8)"/><rect x="1.5" y="1.5" width="9.5" height="9.5" fill="#fafafa" stroke="#222" stroke-width="1"/><rect x="3" y="3" width="6.5" height="6.5" fill="#b8c8e8"/><path d="M5 8.5L6.2 4H8.2V7.6Q7.4 9.6 5 8.5Z" fill="#2a56b8"/></svg>
<div class="a " style="left:1374px;top:117px;width:19px;height:19px;border-radius:50%;background:rgba(200,205,225,.4)"></div>
<svg class="a" style="left:1375.5px;top:118.5px;" width="16" height="16" viewBox="0 0 16 16"><circle cx="8" cy="8" r="6.4" fill="#3f74c0" stroke="#1a2a48" stroke-width="1"/><path d="M3.5 5Q5 2.6 7.6 2.6Q8.6 4 7 5Q7.4 6.6 5.6 7Q4.4 8.6 3 7.4Z" fill="#5fb85a"/><path d="M8.8 7.4Q11 6 12.8 7.6Q13.6 10 11.4 12.6Q9.6 12.6 9.6 10.6Q8 9.2 8.8 7.4Z" fill="#5fb85a"/><path d="M4.6 10.4Q6.4 10 6.8 11.8Q6.4 13.4 5 12.6Z" fill="#5fb85a"/><path d="M3.2 4.6Q5.6 2 9 2.4" fill="none" stroke="#cfe0f8" stroke-width="1" opacity=".7"/></svg>
<div class="a t" style="left:1394.0px;top:120.2px;font-size:11.4px;color:#000;letter-spacing:-0.113px;">World</div>
<div class="a " style="left:1366px;top:146.5px;width:10px;height:1px;background:#3c3c3c"></div>
<svg class="a" style="left:1355.5px;top:141px;" width="11" height="11" viewBox="0 0 11 11"><circle cx="5.5" cy="5.5" r="4.1" fill="#f2f2f2" stroke="#1a1a1a" stroke-width="1.1"/><path d="M3.2 5.5H7.8 M5.5 3.2V7.8" stroke="#1a1a1a" stroke-width="1.3"/></svg>
<svg class="a" style="left:1374.5px;top:138.5px;" width="16" height="16" viewBox="0 0 16 16"><rect x="2" y="6.8" width="8.6" height="5.6" rx="1" fill="#f0a040" stroke="#6a3a08" stroke-width=".9"/><circle cx="4.4" cy="4.4" r="2.3" fill="#f0a040" stroke="#6a3a08" stroke-width=".9"/><circle cx="9.2" cy="4.2" r="2.6" fill="#f0a040" stroke="#6a3a08" stroke-width=".9"/><path d="M10.6 8.2L14.4 6.6V12.6L10.6 11Z" fill="#f0a040" stroke="#6a3a08" stroke-width=".9" stroke-linejoin="round"/><rect x="4.4" y="12.4" width="3.4" height="2" fill="#f0a040" stroke="#6a3a08" stroke-width=".7"/></svg>
<div class="a t" style="left:1394.0px;top:140.2px;font-size:11.4px;color:#000;letter-spacing:-0.258px;">Camera</div>
<div class="a " style="left:1443.2px;top:140px;width:2px;height:13px;background:#3c3c3c"></div>
<svg class="a" style="left:1453px;top:138.5px;" width="16" height="16" viewBox="0 0 16 16"><circle cx="8" cy="8" r="7.6" fill="#a8a8a8" opacity=".75"/><rect x="3" y="7.2" width="7.4" height="4.8" rx="1" fill="#8a8a8a" stroke="#e8e8e8" stroke-width=".9"/><circle cx="5" cy="5" r="1.9" fill="#8a8a8a" stroke="#e8e8e8" stroke-width=".9"/><circle cx="9" cy="4.8" r="2.2" fill="#8a8a8a" stroke="#e8e8e8" stroke-width=".9"/><path d="M10.4 8.4L13.4 7.2V12L10.4 10.8Z" fill="#8a8a8a" stroke="#e8e8e8" stroke-width=".9"/></svg>
<svg class="a" style="left:1601.5px;top:138.5px;" width="16" height="16" viewBox="0 0 16 16"><path d="M1 8.4Q8 1.6 15 8.4Q8 14 1 8.4Z" fill="#f4f4f4" stroke="#1c1c1c" stroke-width="1"/><circle cx="8" cy="8" r="2.9" fill="#555"/><circle cx="8" cy="8" r="1.4" fill="#111"/><circle cx="7" cy="7" r=".8" fill="#fff"/><path d="M1 7.6Q8 0.6 15 7.6" fill="none" stroke="#1c1c1c" stroke-width="1.1"/></svg>
<svg class="a" style="left:1622px;top:138.5px;" width="16" height="16" viewBox="0 0 16 16"><path d="M4.2 1.6V12.6L6.9 10L8.9 14.6L10.9 13.7L8.9 9.2H12.6Z" fill="#fff" stroke="#111" stroke-width="1.1" stroke-linejoin="round"/></svg>
<svg class="a" style="left:1641.5px;top:138.5px;" width="16" height="16" viewBox="0 0 16 16"><rect x="1.8" y="4.8" width="12.4" height="9" rx="1" fill="#e4e4e4" stroke="#1c1c1c" stroke-width="1.1"/><rect x="3.2" y="2.8" width="4" height="2" fill="#bbb" stroke="#1c1c1c" stroke-width=".8"/><circle cx="8.4" cy="9.4" r="3.1" fill="#666" stroke="#1c1c1c" stroke-width=".9"/><circle cx="8.4" cy="9.4" r="1.6" fill="#c84040"/><rect x="11.4" y="6" width="1.8" height="1.4" fill="#555"/></svg>
<div class="a " style="left:1366px;top:166.5px;width:10px;height:1px;background:#3c3c3c"></div>
<svg class="a" style="left:1355.5px;top:161px;" width="11" height="11" viewBox="0 0 11 11"><circle cx="5.5" cy="5.5" r="4.1" fill="#f2f2f2" stroke="#1a1a1a" stroke-width="1.1"/><path d="M3.2 5.5H7.8 M5.5 3.2V7.8" stroke="#1a1a1a" stroke-width="1.3"/></svg>
<div class="a " style="left:1373.5px;top:157.5px;width:18px;height:18px;border-radius:50%;background:rgba(228,140,56,.6)"></div>
<svg class="a" style="left:1374.5px;top:158.5px;" width="16" height="16" viewBox="0 0 16 16"><path d="M2.4 3.2H13.6L8 13.6Z" fill="none" stroke="#6a3a08" stroke-width="3.4" stroke-linejoin="round"/><path d="M2.4 3.2H13.6L8 13.6Z" fill="none" stroke="#f7a84a" stroke-width="1.8" stroke-linejoin="round"/></svg>
<div class="a t" style="left:1394.0px;top:160.2px;font-size:11.4px;color:#fff;letter-spacing:-0.438px;">Cube</div>
<div class="a " style="left:1429.2px;top:160px;width:2px;height:13px;background:#3c3c3c"></div>
<svg class="a" style="left:1439px;top:158.5px;" width="16" height="16" viewBox="0 0 16 16"><path d="M2.8 3.4H13.2L8 13Z" fill="none" stroke="#3c3c3c" stroke-width="1.2"/><circle cx="2.8" cy="3.4" r="1.6" fill="#eaeaea" stroke="#333" stroke-width=".8"/><circle cx="13.2" cy="3.4" r="1.6" fill="#eaeaea" stroke="#333" stroke-width=".8"/><circle cx="8" cy="13" r="1.6" fill="#eaeaea" stroke="#333" stroke-width=".8"/></svg>
<svg class="a" style="left:1601.5px;top:158.5px;" width="16" height="16" viewBox="0 0 16 16"><path d="M1 8.4Q8 1.6 15 8.4Q8 14 1 8.4Z" fill="#f4f4f4" stroke="#1c1c1c" stroke-width="1"/><circle cx="8" cy="8" r="2.9" fill="#555"/><circle cx="8" cy="8" r="1.4" fill="#111"/><circle cx="7" cy="7" r=".8" fill="#fff"/><path d="M1 7.6Q8 0.6 15 7.6" fill="none" stroke="#1c1c1c" stroke-width="1.1"/></svg>
<svg class="a" style="left:1622px;top:158.5px;" width="16" height="16" viewBox="0 0 16 16"><path d="M4.2 1.6V12.6L6.9 10L8.9 14.6L10.9 13.7L8.9 9.2H12.6Z" fill="#fff" stroke="#111" stroke-width="1.1" stroke-linejoin="round"/></svg>
<svg class="a" style="left:1641.5px;top:158.5px;" width="16" height="16" viewBox="0 0 16 16"><rect x="1.8" y="4.8" width="12.4" height="9" rx="1" fill="#e4e4e4" stroke="#1c1c1c" stroke-width="1.1"/><rect x="3.2" y="2.8" width="4" height="2" fill="#bbb" stroke="#1c1c1c" stroke-width=".8"/><circle cx="8.4" cy="9.4" r="3.1" fill="#666" stroke="#1c1c1c" stroke-width=".9"/><circle cx="8.4" cy="9.4" r="1.6" fill="#c84040"/><rect x="11.4" y="6" width="1.8" height="1.4" fill="#555"/></svg>
<div class="a " style="left:1366px;top:186.5px;width:10px;height:1px;background:#3c3c3c"></div>
<svg class="a" style="left:1355.5px;top:181px;" width="11" height="11" viewBox="0 0 11 11"><circle cx="5.5" cy="5.5" r="4.1" fill="#f2f2f2" stroke="#1a1a1a" stroke-width="1.1"/><path d="M3.2 5.5H7.8 M5.5 3.2V7.8" stroke="#1a1a1a" stroke-width="1.3"/></svg>
<svg class="a" style="left:1374.5px;top:178.5px;" width="16" height="16" viewBox="0 0 16 16"><path d="M8 1.4Q12.4 1.6 12.4 5.8Q12.2 8 10.4 9.6V11H5.6V9.6Q3.8 8 3.6 5.8Q3.6 1.6 8 1.4Z" fill="#f7b45a" stroke="#6a3a08" stroke-width=".9"/><path d="M6.6 5Q6 3.4 7.6 2.8" fill="none" stroke="#fff" stroke-width="1.1"/><rect x="5.8" y="11" width="4.4" height="2.2" fill="#e8e8e8" stroke="#333" stroke-width=".7"/><rect x="6.6" y="13.2" width="2.8" height="1.6" fill="#c0c0c0" stroke="#333" stroke-width=".7"/></svg>
<div class="a t" style="left:1394.0px;top:180.2px;font-size:11.4px;color:#000;letter-spacing:-0.004px;">Lamp</div>
<div class="a " style="left:1433.2px;top:180px;width:2px;height:13px;background:#3c3c3c"></div>
<svg class="a" style="left:1443px;top:178.5px;" width="16" height="16" viewBox="0 0 16 16"><path d="M8 .8V3.4M8 12.6V15.2M.8 8H3.4M12.6 8H15.2M2.9 2.9L4.7 4.7M11.3 11.3L13.1 13.1M13.1 2.9L11.3 4.7M2.9 13.1L4.7 11.3" stroke="#9c986c" stroke-width="1.9"/><circle cx="8" cy="8" r="3.8" fill="url(#ldg)" stroke="#6a6838" stroke-width=".6"/><defs><radialGradient id="ldg" cx=".4" cy=".35" r=".7"><stop offset="0" stop-color="#e8e4a8"/><stop offset="1" stop-color="#8c8a50"/></radialGradient></defs></svg>
<svg class="a" style="left:1601.5px;top:178.5px;" width="16" height="16" viewBox="0 0 16 16"><path d="M1 8.4Q8 1.6 15 8.4Q8 14 1 8.4Z" fill="#f4f4f4" stroke="#1c1c1c" stroke-width="1"/><circle cx="8" cy="8" r="2.9" fill="#555"/><circle cx="8" cy="8" r="1.4" fill="#111"/><circle cx="7" cy="7" r=".8" fill="#fff"/><path d="M1 7.6Q8 0.6 15 7.6" fill="none" stroke="#1c1c1c" stroke-width="1.1"/></svg>
<svg class="a" style="left:1622px;top:178.5px;" width="16" height="16" viewBox="0 0 16 16"><path d="M4.2 1.6V12.6L6.9 10L8.9 14.6L10.9 13.7L8.9 9.2H12.6Z" fill="#fff" stroke="#111" stroke-width="1.1" stroke-linejoin="round"/></svg>
<svg class="a" style="left:1641.5px;top:178.5px;" width="16" height="16" viewBox="0 0 16 16"><rect x="1.8" y="4.8" width="12.4" height="9" rx="1" fill="#e4e4e4" stroke="#1c1c1c" stroke-width="1.1"/><rect x="3.2" y="2.8" width="4" height="2" fill="#bbb" stroke="#1c1c1c" stroke-width=".8"/><circle cx="8.4" cy="9.4" r="3.1" fill="#666" stroke="#1c1c1c" stroke-width=".9"/><circle cx="8.4" cy="9.4" r="1.6" fill="#c84040"/><rect x="11.4" y="6" width="1.8" height="1.4" fill="#555"/></svg>
<div class="a " style="left:1366px;top:206.5px;width:10px;height:1px;background:#3c3c3c"></div>
<svg class="a" style="left:1355.5px;top:201px;" width="11" height="11" viewBox="0 0 11 11"><circle cx="5.5" cy="5.5" r="4.1" fill="#f2f2f2" stroke="#1a1a1a" stroke-width="1.1"/><path d="M3.2 5.5H7.8 M5.5 3.2V7.8" stroke="#1a1a1a" stroke-width="1.3"/></svg>
<svg class="a" style="left:1374.5px;top:198.5px;" width="16" height="16" viewBox="0 0 16 16"><path d="M2.4 3.2H13.6L8 13.6Z" fill="none" stroke="#6a3a08" stroke-width="3.4" stroke-linejoin="round"/><path d="M2.4 3.2H13.6L8 13.6Z" fill="none" stroke="#f7a84a" stroke-width="1.8" stroke-linejoin="round"/></svg>
<div class="a t" style="left:1394.0px;top:200.2px;font-size:11.4px;color:#000;letter-spacing:-0.231px;">Plane</div>
<div class="a " style="left:1431.2px;top:200px;width:2px;height:13px;background:#3c3c3c"></div>
<svg class="a" style="left:1441px;top:198.5px;" width="16" height="16" viewBox="0 0 16 16"><path d="M2.8 3.4H13.2L8 13Z" fill="none" stroke="#3c3c3c" stroke-width="1.2"/><circle cx="2.8" cy="3.4" r="1.6" fill="#eaeaea" stroke="#333" stroke-width=".8"/><circle cx="13.2" cy="3.4" r="1.6" fill="#eaeaea" stroke="#333" stroke-width=".8"/><circle cx="8" cy="13" r="1.6" fill="#eaeaea" stroke="#333" stroke-width=".8"/></svg>
<svg class="a" style="left:1601.5px;top:198.5px;" width="16" height="16" viewBox="0 0 16 16"><path d="M1 8.4Q8 1.6 15 8.4Q8 14 1 8.4Z" fill="#f4f4f4" stroke="#1c1c1c" stroke-width="1"/><circle cx="8" cy="8" r="2.9" fill="#555"/><circle cx="8" cy="8" r="1.4" fill="#111"/><circle cx="7" cy="7" r=".8" fill="#fff"/><path d="M1 7.6Q8 0.6 15 7.6" fill="none" stroke="#1c1c1c" stroke-width="1.1"/></svg>
<svg class="a" style="left:1622px;top:198.5px;" width="16" height="16" viewBox="0 0 16 16"><path d="M4.2 1.6V12.6L6.9 10L8.9 14.6L10.9 13.7L8.9 9.2H12.6Z" fill="#fff" stroke="#111" stroke-width="1.1" stroke-linejoin="round"/></svg>
<svg class="a" style="left:1641.5px;top:198.5px;" width="16" height="16" viewBox="0 0 16 16"><rect x="1.8" y="4.8" width="12.4" height="9" rx="1" fill="#e4e4e4" stroke="#1c1c1c" stroke-width="1.1"/><rect x="3.2" y="2.8" width="4" height="2" fill="#bbb" stroke="#1c1c1c" stroke-width=".8"/><circle cx="8.4" cy="9.4" r="3.1" fill="#666" stroke="#1c1c1c" stroke-width=".9"/><circle cx="8.4" cy="9.4" r="1.6" fill="#c84040"/><rect x="11.4" y="6" width="1.8" height="1.4" fill="#555"/></svg>
<svg class="a" style="left:1333px;top:203px;" width="14" height="14" viewBox="0 0 14 14"><path d="M0 2L12 14M0 6L8 14M0 10L4 14" stroke="#222" stroke-width="1.1" opacity=".75"/><path d="M0 3.2L10.8 14M0 7.2L6.8 14M0 11.2L2.8 14" stroke="#c8c8c8" stroke-width=".9" opacity=".55"/></svg>
<svg class="a" style="left:1342.5px;top:254.5px;" width="16" height="16" viewBox="0 0 16 16"><g transform="translate(9 7) rotate(45)"><path d="M0 0.5V8" stroke="#222" stroke-width="2" stroke-linecap="round"/><path d="M0 0.5V7.6" stroke="#e8e8e8" stroke-width=".9" stroke-linecap="round"/><path d="M-3.4 -7.6H3.4V-5.9H2L2.7 -1.6H4.4V0.4H-4.4V-1.6H-2.7L-2 -5.9H-3.4Z" fill="#ececec" stroke="#222" stroke-width="1" stroke-linejoin="round"/></g></svg>
<svg class="a" style="left:1366px;top:254px;" width="16" height="16" viewBox="0 0 16 16"><rect x="8.6" y="3.2" width="4.6" height="8.6" rx="2" fill="#3f78c8" stroke="#16305e" stroke-width=".8"/><ellipse cx="10.9" cy="4.2" rx="2.2" ry="1.1" fill="#9cc0f0"/><circle cx="6.1" cy="11" r="3.4" fill="#e8e8e8" stroke="#1a1a1a" stroke-width="1"/><circle cx="5" cy="9.9" r="1.3" fill="#fff"/><circle cx="3.2" cy="3.4" r="1.7" fill="#f4f08a" stroke="#8a8a30" stroke-width=".5"/></svg>
<svg class="a" style="left:1386px;top:258px;" width="5" height="8" viewBox="0 0 5 8"><path d="M0.8 0.8V7.2L4.2 4Z" fill="#3c3c3c"/></svg>
<svg class="a" style="left:1405px;top:254px;" width="16" height="16" viewBox="0 0 16 16"><path d="M2.2 4.6L8 2.2L13.8 4.6V11.2L8 14L2.2 11.2Z" fill="#f0a040" stroke="#6a3a08" stroke-width="1" stroke-linejoin="round"/><path d="M2.2 4.6L8 7L13.8 4.6L8 2.2Z" fill="#ffd9a0"/><path d="M8 7V14L13.8 11.2V4.6Z" fill="#c87818"/><path d="M2.2 4.6L8 7L13.8 4.6M8 7V14" fill="none" stroke="#6a3a08" stroke-width=".7"/></svg>
<div class="a t" style="left:1425.0px;top:255.1px;font-size:11.4px;color:#000;letter-spacing:-0.563px;">Cube</div>
<svg class="a" style="left:1465.5px;top:258px;" width="5" height="8" viewBox="0 0 5 8"><path d="M0.8 0.8V7.2L4.2 4Z" fill="#3c3c3c"/></svg>
<svg class="a" style="left:1485px;top:254px;" width="16" height="16" viewBox="0 0 16 16"><path d="M2.8 3.4H13.2L8 13Z" fill="none" stroke="#1c1c1c" stroke-width="1.1"/><circle cx="2.8" cy="3.4" r="1.5" fill="#f4f4f4" stroke="#1c1c1c" stroke-width=".8"/><circle cx="13.2" cy="3.4" r="1.5" fill="#f4f4f4" stroke="#1c1c1c" stroke-width=".8"/><circle cx="8" cy="13" r="1.5" fill="#f4f4f4" stroke="#1c1c1c" stroke-width=".8"/></svg>
<div class="a t" style="left:1505.0px;top:255.1px;font-size:11.4px;color:#000;letter-spacing:-0.563px;">Cube</div>
<div class="a menu rl emb" style="left:1341px;top:288px;width:32.5px;height:20px;"></div>
<svg class="a" style="left:1344px;top:290px;" width="16" height="16" viewBox="0 0 16 16"><path d="M2.8 3.4H13.2L8 13Z" fill="none" stroke="#111" stroke-width="2.2"/><path d="M2.8 3.4H13.2L8 13Z" fill="none" stroke="#e4e4e4" stroke-width="1"/><circle cx="2.8" cy="3.4" r="1.6" fill="#fff" stroke="#111" stroke-width=".8"/><circle cx="13.2" cy="3.4" r="1.6" fill="#fff" stroke="#111" stroke-width=".8"/><circle cx="8" cy="13" r="1.6" fill="#fff" stroke="#111" stroke-width=".8"/></svg>
<svg class="a" style="left:1362.8px;top:290.7px;" width="7.4" height="14.6" viewBox="0 0 7.4 14.6"><path d="M1 5.8L3.7 1L6.4 5.8Z M1 8.8L3.7 13.6L6.4 8.8Z" fill="#b2b2b2"/></svg>
<div class="a txt r0 emb" style="left:1372.5px;top:288px;width:274.5px;height:20px;"></div>
<div class="a t" style="left:1380.0px;top:290.7px;font-size:11.4px;color:#000;letter-spacing:-0.563px;">Cube</div>
<div class="a tool rr emb" style="left:1646px;top:288px;width:20.5px;height:20px;"></div>
<div class="a t" style="left:1652.5px;top:290.7px;font-size:11.4px;color:#000;">F</div>
<div class="a " style="left:1338px;top:315px;width:332px;height:1px;background:#5e5e5e"></div>
<div class="a " style="left:1338px;top:316px;width:332px;height:1px;background:#828282"></div>
<svg class="a" style="left:1346px;top:323.3px;" width="10" height="10" viewBox="0 0 10 10"><path d="M1 0.6V9.2L9.4 4.9Z" fill="#1a1a1a"/></svg>
<div class="a t" style="left:1358.0px;top:321.1px;font-size:12.3px;color:#000;letter-spacing:0.029px;">Texture Space</div>
<svg class="a" style="left:1648.8px;top:318px;" width="18" height="18" viewBox="0 0 18 18"><path d="M0 0L16.6 16.6M5.8 0L17.5 11.7M11.6 0L17.5 5.9" stroke="#595959" stroke-width="1" opacity=".9"/><path d="M0 1.2L15.9 17.1M5.8 1.2L17.2 12.6M11.6 1.2L17.2 6.8" stroke="#8e8e8e" stroke-width="1" opacity=".9"/></svg>
<div class="a " style="left:1338px;top:339px;width:332px;height:1px;background:#5e5e5e"></div>
<div class="a " style="left:1338px;top:340px;width:332px;height:1px;background:#828282"></div>
<svg class="a" style="left:1345px;top:347px;" width="10" height="10" viewBox="0 0 10 10"><path d="M0.6 1H9.2L4.9 9.4Z" fill="#1a1a1a"/></svg>
<div class="a t" style="left:1358.0px;top:345.1px;font-size:12.3px;color:#000;letter-spacing:0.067px;">Vertex Groups</div>
<svg class="a" style="left:1648.8px;top:342px;" width="18" height="18" viewBox="0 0 18 18"><path d="M0 0L16.6 16.6M5.8 0L17.5 11.7M11.6 0L17.5 5.9" stroke="#595959" stroke-width="1" opacity=".9"/><path d="M0 1.2L15.9 17.1M5.8 1.2L17.2 12.6M11.6 1.2L17.2 6.8" stroke="#8e8e8e" stroke-width="1" opacity=".9"/></svg>
<div class="a list emb" style="left:1341px;top:372px;width:298px;height:63px;"></div>
<svg class="a" style="left:1350px;top:420px;" width="10" height="10" viewBox="0 0 10 10"><circle cx="5" cy="5" r="4" fill="#9a9a9a" stroke="#3a3a3a" stroke-width=".9"/><path d="M2.6 5H7.4M5 2.6V7.4" stroke="#3a3a3a" stroke-width="1.1"/></svg>
<div class="a " style="left:1491.5px;top:423px;width:15px;height:1px;background:#2e2e2e"></div>
<div class="a " style="left:1491.5px;top:426px;width:15px;height:1px;background:#2e2e2e"></div>
<div class="a " style="left:1491.5px;top:424px;width:15px;height:1px;background:#b0b0b0"></div>
<div class="a " style="left:1491.5px;top:427px;width:15px;height:1px;background:#b0b0b0"></div>
<div class="a tool rt" style="left:1647px;top:371.9px;width:19.5px;height:20.6px;"></div>
<svg class="a" style="left:1648.8px;top:373.8px;" width="16" height="16" viewBox="0 0 16 16"><path d="M6.7 2.4h2.6v4.3h4.3v2.6h-4.3v4.3h-2.6v-4.3h-4.3v-2.6h4.3z" fill="#fff" stroke="#1c1c1c" stroke-width=".9" stroke-linejoin="round"/></svg>
<div class="a tool r0" style="left:1647px;top:391.5px;width:19.5px;height:21px;background:#8a8a8a;border-color:#4a4a4a"></div>
<svg class="a" style="left:1650.5px;top:398.5px;" width="13" height="7" viewBox="0 0 13 7"><rect x="1" y="1.5" width="10.6" height="3" rx=".8" fill="#b8b8b8" stroke="#6a6a6a" stroke-width=".8"/></svg>
<div class="a menu rb emb" style="left:1647px;top:411.5px;width:19.5px;height:20.5px;"></div>
<svg class="a" style="left:1652px;top:417.5px;" width="10" height="9" viewBox="0 0 10 9"><path d="M0.8 1H9.2L6.5 8.4Z" fill="#111"/><path d="M9 1.4L6.4 8" stroke="#ddd" stroke-width="1.2"/></svg>
<div class="a " style="left:1338px;top:441.5px;width:332px;height:1px;background:#5e5e5e"></div>
<div class="a " style="left:1338px;top:442.5px;width:332px;height:1px;background:#828282"></div>
<svg class="a" style="left:1345px;top:450px;" width="10" height="10" viewBox="0 0 10 10"><path d="M0.6 1H9.2L4.9 9.4Z" fill="#1a1a1a"/></svg>
<div class="a t" style="left:1358.0px;top:448.1px;font-size:12.3px;color:#000;letter-spacing:-0.183px;">Shape Keys</div>
<svg class="a" style="left:1648.8px;top:445px;" width="18" height="18" viewBox="0 0 18 18"><path d="M0 0L16.6 16.6M5.8 0L17.5 11.7M11.6 0L17.5 5.9" stroke="#595959" stroke-width="1" opacity=".9"/><path d="M0 1.2L15.9 17.1M5.8 1.2L17.2 12.6M11.6 1.2L17.2 6.8" stroke="#8e8e8e" stroke-width="1" opacity=".9"/></svg>
<div class="a list emb" style="left:1341px;top:475px;width:298px;height:63px;"></div>
<svg class="a" style="left:1350px;top:523px;" width="10" height="10" viewBox="0 0 10 10"><circle cx="5" cy="5" r="4" fill="#9a9a9a" stroke="#3a3a3a" stroke-width=".9"/><path d="M2.6 5H7.4M5 2.6V7.4" stroke="#3a3a3a" stroke-width="1.1"/></svg>
<div class="a " style="left:1491.5px;top:526px;width:15px;height:1px;background:#2e2e2e"></div>
<div class="a " style="left:1491.5px;top:529px;width:15px;height:1px;background:#2e2e2e"></div>
<div class="a " style="left:1491.5px;top:527px;width:15px;height:1px;background:#b0b0b0"></div>
<div class="a " style="left:1491.5px;top:530px;width:15px;height:1px;background:#b0b0b0"></div>
<div class="a tool rt" style="left:1647px;top:474.9px;width:19.5px;height:20.6px;"></div>
<svg class="a" style="left:1648.8px;top:476.8px;" width="16" height="16" viewBox="0 0 16 16"><path d="M6.7 2.4h2.6v4.3h4.3v2.6h-4.3v4.3h-2.6v-4.3h-4.3v-2.6h4.3z" fill="#fff" stroke="#1c1c1c" stroke-width=".9" stroke-linejoin="round"/></svg>
<div class="a tool r0" style="left:1647px;top:494.5px;width:19.5px;height:21px;background:#8a8a8a;border-color:#4a4a4a"></div>
<svg class="a" style="left:1650.5px;top:501.5px;" width="13" height="7" viewBox="0 0 13 7"><rect x="1" y="1.5" width="10.6" height="3" rx=".8" fill="#b8b8b8" stroke="#6a6a6a" stroke-width=".8"/></svg>
<div class="a menu rb emb" style="left:1647px;top:514.5px;width:19.5px;height:20.5px;"></div>
<svg class="a" style="left:1652px;top:520.5px;" width="10" height="9" viewBox="0 0 10 9"><path d="M0.8 1H9.2L6.5 8.4Z" fill="#111"/><path d="M9 1.4L6.4 8" stroke="#ddd" stroke-width="1.2"/></svg>
<div class="a " style="left:1338px;top:544.5px;width:332px;height:1px;background:#5e5e5e"></div>
<div class="a " style="left:1338px;top:545.5px;width:332px;height:1px;background:#828282"></div>
<svg class="a" style="left:1345px;top:553px;" width="10" height="10" viewBox="0 0 10 10"><path d="M0.6 1H9.2L4.9 9.4Z" fill="#1a1a1a"/></svg>
<div class="a t" style="left:1358.0px;top:551.1px;font-size:12.3px;color:#000;letter-spacing:-0.297px;">UV Maps</div>
<svg class="a" style="left:1648.8px;top:548px;" width="18" height="18" viewBox="0 0 18 18"><path d="M0 0L16.6 16.6M5.8 0L17.5 11.7M11.6 0L17.5 5.9" stroke="#595959" stroke-width="1" opacity=".9"/><path d="M0 1.2L15.9 17.1M5.8 1.2L17.2 12.6M11.6 1.2L17.2 6.8" stroke="#8e8e8e" stroke-width="1" opacity=".9"/></svg>
<div class="a list emb" style="left:1341px;top:578px;width:298px;height:43px;"></div>
<svg class="a" style="left:1350px;top:606px;" width="10" height="10" viewBox="0 0 10 10"><circle cx="5" cy="5" r="4" fill="#9a9a9a" stroke="#3a3a3a" stroke-width=".9"/><path d="M2.6 5H7.4M5 2.6V7.4" stroke="#3a3a3a" stroke-width="1.1"/></svg>
<div class="a " style="left:1491.5px;top:609px;width:15px;height:1px;background:#2e2e2e"></div>
<div class="a " style="left:1491.5px;top:612px;width:15px;height:1px;background:#2e2e2e"></div>
<div class="a " style="left:1491.5px;top:610px;width:15px;height:1px;background:#b0b0b0"></div>
<div class="a " style="left:1491.5px;top:613px;width:15px;height:1px;background:#b0b0b0"></div>
<div class="a tool rt" style="left:1647px;top:577.9px;width:19.5px;height:20.6px;"></div>
<svg class="a" style="left:1648.8px;top:579.8px;" width="16" height="16" viewBox="0 0 16 16"><path d="M6.7 2.4h2.6v4.3h4.3v2.6h-4.3v4.3h-2.6v-4.3h-4.3v-2.6h4.3z" fill="#fff" stroke="#1c1c1c" stroke-width=".9" stroke-linejoin="round"/></svg>
<div class="a tool rb emb" style="left:1647px;top:597.5px;width:19.5px;height:21px;"></div>
<svg class="a" style="left:1650.5px;top:604.5px;" width="13" height="7" viewBox="0 0 13 7"><rect x="1" y="1.5" width="10.6" height="3" rx=".8" fill="#fff" stroke="#222" stroke-width=".9"/></svg>
<div class="a " style="left:1338px;top:627.5px;width:332px;height:1px;background:#5e5e5e"></div>
<div class="a " style="left:1338px;top:628.5px;width:332px;height:1px;background:#828282"></div>
<svg class="a" style="left:1345px;top:636px;" width="10" height="10" viewBox="0 0 10 10"><path d="M0.6 1H9.2L4.9 9.4Z" fill="#1a1a1a"/></svg>
<div class="a t" style="left:1358.0px;top:634.1px;font-size:12.3px;color:#000;letter-spacing:0.090px;">Vertex Colors</div>
<svg class="a" style="left:1648.8px;top:631px;" width="18" height="18" viewBox="0 0 18 18"><path d="M0 0L16.6 16.6M5.8 0L17.5 11.7M11.6 0L17.5 5.9" stroke="#595959" stroke-width="1" opacity=".9"/><path d="M0 1.2L15.9 17.1M5.8 1.2L17.2 12.6M11.6 1.2L17.2 6.8" stroke="#8e8e8e" stroke-width="1" opacity=".9"/></svg>
<div class="a list emb" style="left:1341px;top:661px;width:298px;height:43px;"></div>
<svg class="a" style="left:1350px;top:689px;" width="10" height="10" viewBox="0 0 10 10"><circle cx="5" cy="5" r="4" fill="#9a9a9a" stroke="#3a3a3a" stroke-width=".9"/><path d="M2.6 5H7.4M5 2.6V7.4" stroke="#3a3a3a" stroke-width="1.1"/></svg>
<div class="a " style="left:1491.5px;top:692px;width:15px;height:1px;background:#2e2e2e"></div>
<div class="a " style="left:1491.5px;top:695px;width:15px;height:1px;background:#2e2e2e"></div>
<div class="a " style="left:1491.5px;top:693px;width:15px;height:1px;background:#b0b0b0"></div>
<div class="a " style="left:1491.5px;top:696px;width:15px;height:1px;background:#b0b0b0"></div>
<div class="a tool rt" style="left:1647px;top:660.9px;width:19.5px;height:20.6px;"></div>
<svg class="a" style="left:1648.8px;top:662.8px;" width="16" height="16" viewBox="0 0 16 16"><path d="M6.7 2.4h2.6v4.3h4.3v2.6h-4.3v4.3h-2.6v-4.3h-4.3v-2.6h4.3z" fill="#fff" stroke="#1c1c1c" stroke-width=".9" stroke-linejoin="round"/></svg>
<div class="a tool rb emb" style="left:1647px;top:680.5px;width:19.5px;height:21px;"></div>
<svg class="a" style="left:1650.5px;top:687.5px;" width="13" height="7" viewBox="0 0 13 7"><rect x="1" y="1.5" width="10.6" height="3" rx=".8" fill="#fff" stroke="#222" stroke-width=".9"/></svg>
<div class="a " style="left:1338px;top:710.5px;width:332px;height:1px;background:#5e5e5e"></div>
<div class="a " style="left:1338px;top:711.5px;width:332px;height:1px;background:#828282"></div>
<svg class="a" style="left:1346px;top:719.3px;" width="10" height="10" viewBox="0 0 10 10"><path d="M1 0.6V9.2L9.4 4.9Z" fill="#1a1a1a"/></svg>
<div class="a t" style="left:1358.0px;top:717.1px;font-size:12.3px;color:#000;letter-spacing:0.123px;">Geometry Data</div>
<svg class="a" style="left:1648.8px;top:714px;" width="18" height="18" viewBox="0 0 18 18"><path d="M0 0L16.6 16.6M5.8 0L17.5 11.7M11.6 0L17.5 5.9" stroke="#595959" stroke-width="1" opacity=".9"/><path d="M0 1.2L15.9 17.1M5.8 1.2L17.2 12.6M11.6 1.2L17.2 6.8" stroke="#8e8e8e" stroke-width="1" opacity=".9"/></svg>
<div class="a " style="left:1338px;top:734.5px;width:332px;height:1px;background:#5e5e5e"></div>
<div class="a " style="left:1338px;top:735.5px;width:332px;height:1px;background:#828282"></div>
<svg class="a" style="left:1346px;top:743.3px;" width="10" height="10" viewBox="0 0 10 10"><path d="M1 0.6V9.2L9.4 4.9Z" fill="#1a1a1a"/></svg>
<div class="a t" style="left:1358.0px;top:741.1px;font-size:12.3px;color:#000;letter-spacing:-0.021px;">Custom Properties</div>
<svg class="a" style="left:1648.8px;top:738px;" width="18" height="18" viewBox="0 0 18 18"><path d="M0 0L16.6 16.6M5.8 0L17.5 11.7M11.6 0L17.5 5.9" stroke="#595959" stroke-width="1" opacity=".9"/><path d="M0 1.2L15.9 17.1M5.8 1.2L17.2 12.6M11.6 1.2L17.2 6.8" stroke="#8e8e8e" stroke-width="1" opacity=".9"/></svg>
<div class="a " style="left:1338px;top:758.5px;width:332px;height:1px;background:#5e5e5e"></div>
<div class="a " style="left:1338px;top:759.5px;width:332px;height:1px;background:#828282"></div>
<svg class="a" style="left:1345px;top:767px;" width="10" height="10" viewBox="0 0 10 10"><path d="M0.6 1H9.2L4.9 9.4Z" fill="#1a1a1a"/></svg>
<div class="a t" style="left:1358.0px;top:765.1px;font-size:12.3px;color:#000;letter-spacing:0.043px;">Octane properties</div>
<svg class="a" style="left:1648.8px;top:762px;" width="18" height="18" viewBox="0 0 18 18"><path d="M0 0L16.6 16.6M5.8 0L17.5 11.7M11.6 0L17.5 5.9" stroke="#595959" stroke-width="1" opacity=".9"/><path d="M0 1.2L15.9 17.1M5.8 1.2L17.2 12.6M11.6 1.2L17.2 6.8" stroke="#8e8e8e" stroke-width="1" opacity=".9"/></svg>
<div class="a t" style="left:1349.0px;top:794.8px;font-size:11.4px;color:#000;letter-spacing:-0.126px;">Mesh type:</div>
<div class="a menu rl emb" style="left:1441px;top:792px;width:206.5px;height:20px;"></div>
<div class="a t" style="left:1449.0px;top:794.8px;font-size:11.4px;color:#fff;letter-spacing:-0.242px;">Global</div>
<svg class="a" style="left:1636.8px;top:794.9px;" width="7.4" height="14.6" viewBox="0 0 7.4 14.6"><path d="M1 5.8L3.7 1L6.4 5.8Z M1 8.8L3.7 13.6L6.4 8.8Z" fill="#b2b2b2"/></svg>
<div class="a tool rr emb" style="left:1646.5px;top:792px;width:20px;height:20px;"></div>
<svg class="a" style="left:1648.5px;top:794px;" width="16" height="16" viewBox="0 0 16 16"><path d="M2.8 3.4H13.2L8 13Z" fill="none" stroke="#111" stroke-width="2.2"/><path d="M2.8 3.4H13.2L8 13Z" fill="none" stroke="#e4e4e4" stroke-width="1"/><circle cx="2.8" cy="3.4" r="1.6" fill="#fff" stroke="#111" stroke-width=".8"/><circle cx="13.2" cy="3.4" r="1.6" fill="#fff" stroke="#111" stroke-width=".8"/><circle cx="8" cy="13" r="1.6" fill="#fff" stroke="#111" stroke-width=".8"/></svg>
<div class="a t" style="left:1349.0px;top:820.1px;font-size:11.4px;color:#000;letter-spacing:-0.206px;">Subdivision:</div>
<div class="a opt emb" style="left:1451px;top:820px;width:14px;height:14px;"></div>
<div class="a num emb" style="left:1477px;top:817px;width:189.5px;height:20px;"></div>
<svg class="a" style="left:1485px;top:822.5px;" width="5" height="9" viewBox="0 0 5 9"><path d="M4.5 0.8V8.2L0.8 4.5Z" fill="#6e6e6e"/></svg>
<svg class="a" style="left:1654.5px;top:822.5px;" width="5" height="9" viewBox="0 0 5 9"><path d="M0.5 0.8V8.2L4.2 4.5Z" fill="#6e6e6e"/></svg>
<div class="a t" style="left:1493.0px;top:820.1px;font-size:11.4px;color:#000;letter-spacing:0.107px;">Divider:</div>
<div class="a t" style="left:1627.5px;top:820.1px;font-size:11.4px;color:#000;letter-spacing:0.203px;">1.00</div>
<div class="a num emb" style="left:1341px;top:842px;width:325.5px;height:20px;"></div>
<svg class="a" style="left:1349px;top:847.5px;" width="5" height="9" viewBox="0 0 5 9"><path d="M4.5 0.8V8.2L0.8 4.5Z" fill="#6e6e6e"/></svg>
<svg class="a" style="left:1654.5px;top:847.5px;" width="5" height="9" viewBox="0 0 5 9"><path d="M0.5 0.8V8.2L4.2 4.5Z" fill="#6e6e6e"/></svg>
<div class="a t" style="left:1357.0px;top:845.1px;font-size:11.4px;color:#000;letter-spacing:0.070px;">General visibility:</div>
<div class="a t" style="left:1627.5px;top:845.1px;font-size:11.4px;color:#000;letter-spacing:0.203px;">1.00</div>
<div class="a opt emb" style="left:1344px;top:870px;width:14px;height:14px;"></div>
<div class="a t" style="left:1366.0px;top:870.0px;font-size:11.4px;color:#000;letter-spacing:0.060px;">Camera visibility</div>
<div class="a opt emb" style="left:1344px;top:895px;width:14px;height:14px;"></div>
<div class="a t" style="left:1366.0px;top:895.0px;font-size:11.4px;color:#000;letter-spacing:0.021px;">Shadow visibility</div>
<svg class="a" style="left:1333px;top:1004px;" width="14" height="14" viewBox="0 0 14 14"><path d="M0 2L12 14M0 6L8 14M0 10L4 14" stroke="#222" stroke-width="1.1" opacity=".75"/><path d="M0 3.2L10.8 14M0 7.2L6.8 14M0 11.2L2.8 14" stroke="#c8c8c8" stroke-width=".9" opacity=".55"/></svg></div></body></html>
